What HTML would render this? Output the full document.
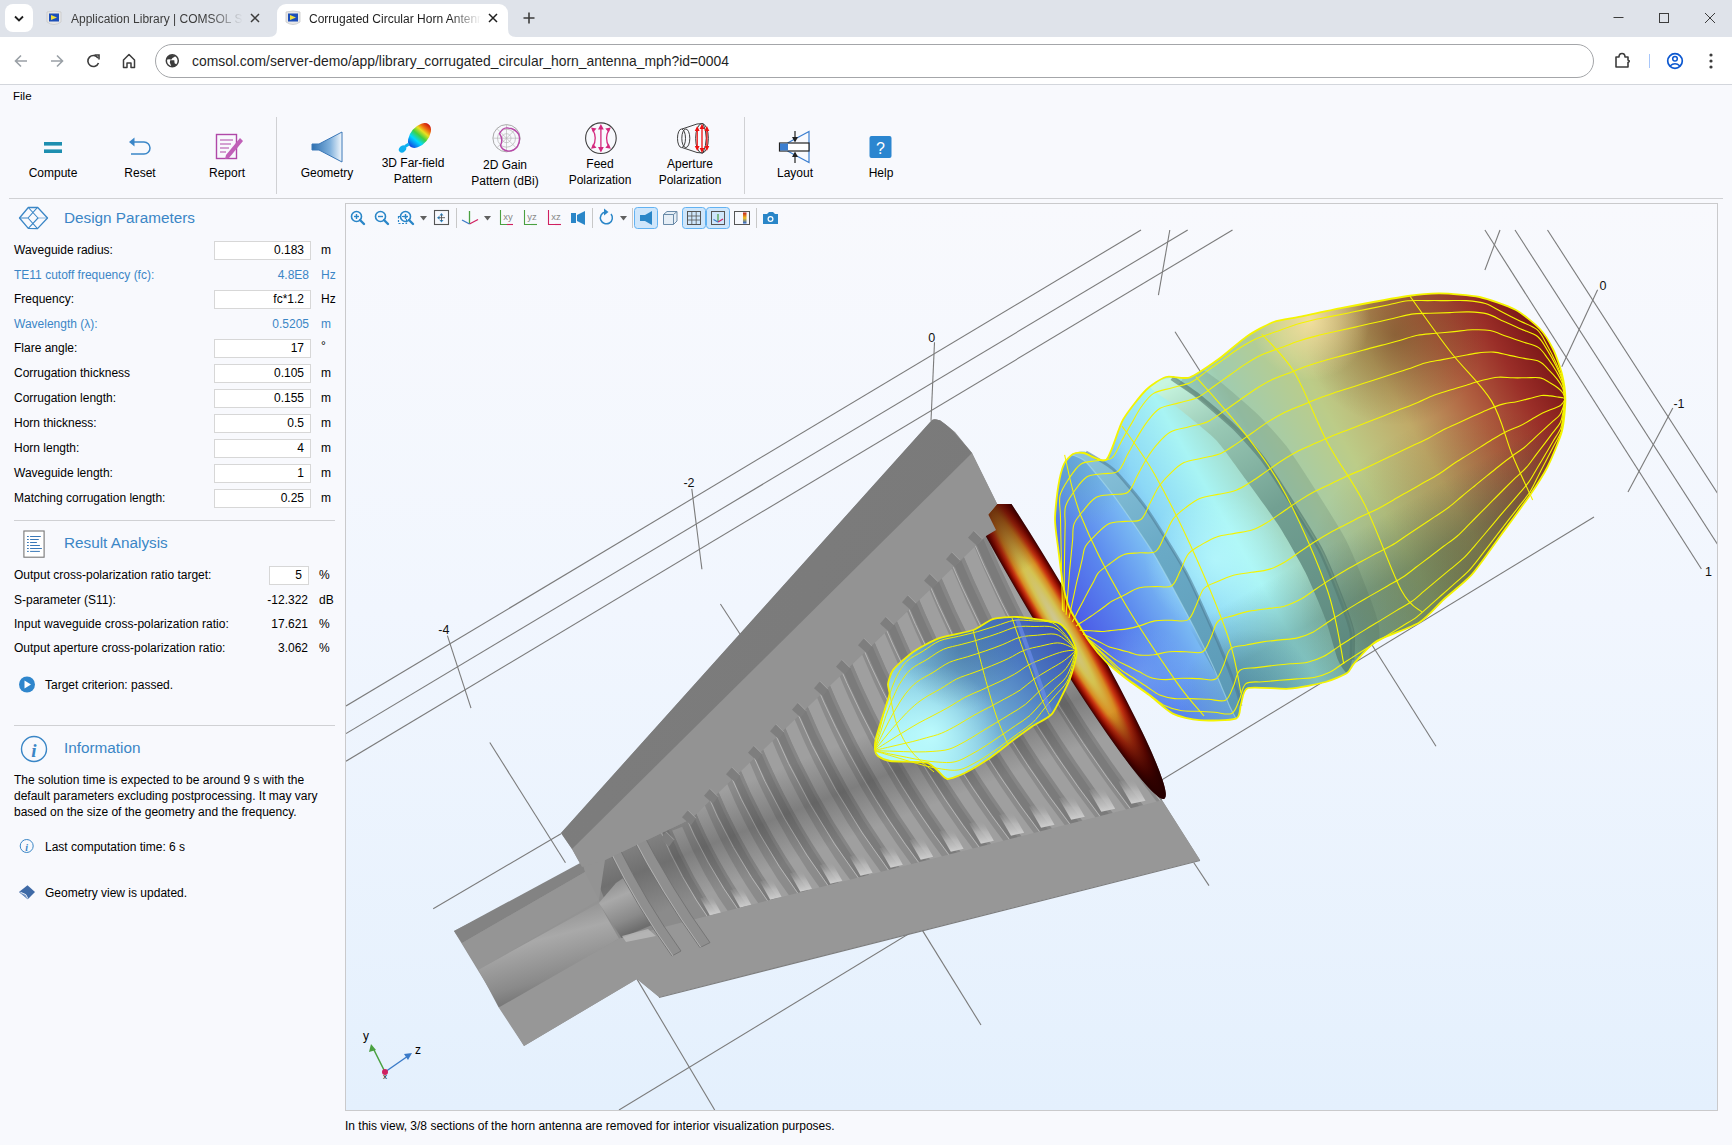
<!DOCTYPE html>
<html><head><meta charset="utf-8">
<style>
*{margin:0;padding:0;box-sizing:border-box}
html,body{width:1732px;height:1145px;overflow:hidden;background:#f8f9fd;font-family:"Liberation Sans",sans-serif;color:#000}
.a{position:absolute;white-space:nowrap}
.t{position:absolute;white-space:nowrap;font-size:12px;line-height:14px}
.blue{color:#3b86c6}
.inp{position:absolute;left:214px;width:97px;height:19px;border:1px solid #d7d7d7;background:#fff;font-size:12px;text-align:right;padding-right:6px;line-height:17px}
.sect{position:absolute;white-space:nowrap;font-size:15.3px;line-height:18px;color:#3b86c6}
.rib{position:absolute;font-size:12px;text-align:center;line-height:16px;white-space:nowrap}
svg{position:absolute;overflow:visible}
</style></head>
<body>
<!-- ===== browser chrome ===== -->
<div class="a" style="left:0;top:0;width:1732px;height:37px;background:#dfe3ea"></div>
<div class="a" style="left:0;top:37px;width:1732px;height:47px;background:#fff"></div>
<div class="a" style="left:0;top:84px;width:1732px;height:1px;background:#d3d6dc"></div>
<div class="a" style="left:5px;top:4px;width:28px;height:28px;background:#fff;border-radius:8px"></div>
<div class="a" style="left:277px;top:4px;width:231px;height:34px;background:#fff;border-radius:9px 9px 0 0"></div>
<svg style="left:0;top:0" width="1732" height="85">
 <path d="M269 37 Q277 37 277 29 L277 37Z M508 29 Q508 37 516 37 L508 37Z" fill="#fff"/>
 <path d="M15 16.5 L19 20.5 L23 16.5" fill="none" stroke="#1f1f1f" stroke-width="1.8"/>
 <!-- favicons -->
 <g transform="translate(47,11)"><path d="M0 1 Q7 -1 14 1 L14 11 Q7 16 0 11Z" fill="#e8e8e8" stroke="#c8c8c8" stroke-width="0.8"/><rect x="2" y="2.5" width="10" height="8" fill="#1d4fb8"/><path d="M4 4 L10 6.5 L4 9Z" fill="#f2e03a"/></g>
 <g transform="translate(286,11)"><path d="M0 1 Q7 -1 14 1 L14 11 Q7 16 0 11Z" fill="#e8e8e8" stroke="#c8c8c8" stroke-width="0.8"/><rect x="2" y="2.5" width="10" height="8" fill="#1d4fb8"/><path d="M4 4 L10 6.5 L4 9Z" fill="#f2e03a"/></g>
 <!-- tab close -->
 <path d="M251 14 L259 22 M259 14 L251 22" stroke="#3c3c3c" stroke-width="1.5"/>
 <path d="M489 14 L497 22 M497 14 L489 22" stroke="#1f1f1f" stroke-width="1.5"/>
 <path d="M529 12.5 L529 23.5 M523.5 18 L534.5 18" stroke="#3c3c3c" stroke-width="1.6"/>
 <!-- window controls -->
 <path d="M1613.5 17.5 L1623.5 17.5" stroke="#3c3c3c" stroke-width="1"/>
 <rect x="1659.5" y="13.5" width="9" height="9" fill="none" stroke="#3c3c3c" stroke-width="1"/>
 <path d="M1705 13 L1715 23 M1715 13 L1705 23" stroke="#3c3c3c" stroke-width="1"/>
 <!-- nav -->
 <path d="M27 61 L15.5 61 M21 55.5 L15.5 61 L21 66.5" fill="none" stroke="#9aa0a6" stroke-width="1.6"/>
 <path d="M51 61 L62.5 61 M57 55.5 L62.5 61 L57 66.5" fill="none" stroke="#9aa0a6" stroke-width="1.6"/>
 <path d="M98 58 A5.5 5.5 0 1 0 98.5 63" fill="none" stroke="#3c3c3c" stroke-width="1.6"/>
 <path d="M94.5 55 L99 55 L99 59.5" fill="none" stroke="#3c3c3c" stroke-width="1.6"/>
 <path d="M123.5 67.5 L123.5 60 L129 54.5 L134.5 60 L134.5 67.5 L131 67.5 L131 63 L127 63 L127 67.5Z" fill="none" stroke="#3c3c3c" stroke-width="1.5" stroke-linejoin="round"/>
 <circle cx="172.3" cy="60.8" r="6" fill="none" stroke="#3c3c3c" stroke-width="1.5"/>
 <path d="M166.6 59.5 Q167.5 56 171 55 L175.8 55.6 Q174.5 57.5 172.5 58 L171.2 59.8 L169.5 59.2Z M170.2 60.2 L174.3 60.3 L174.6 63.2 L176.6 64.6 Q174.5 67 171.5 66.8 L169.8 62.6Z" fill="#3c3c3c"/>
 <!-- right chrome -->
 <path d="M1616 57 L1619 57 Q1619 53.5 1622 53.5 Q1625 53.5 1625 57 L1628 57 L1628 60 Q1630.5 61 1628 62.5 L1628 67 L1616 67Z" fill="none" stroke="#3c3c3c" stroke-width="1.6" stroke-linejoin="round"/>
 <path d="M1649.5 54 L1649.5 68" stroke="#a8c7fa" stroke-width="1"/>
 <circle cx="1675" cy="61" r="7.3" fill="none" stroke="#0b57d0" stroke-width="1.7"/>
 <circle cx="1675" cy="58.8" r="2.3" fill="none" stroke="#0b57d0" stroke-width="1.5"/>
 <path d="M1670 66 Q1675 61.5 1680 66" fill="none" stroke="#0b57d0" stroke-width="1.5"/>
 <circle cx="1711" cy="55" r="1.6" fill="#3c3c3c"/><circle cx="1711" cy="61" r="1.6" fill="#3c3c3c"/><circle cx="1711" cy="67" r="1.6" fill="#3c3c3c"/>
</svg>
<div class="a" style="left:71px;top:12px;font-size:12px;line-height:14px;color:#3c3c3c;width:172px;overflow:hidden;-webkit-mask-image:linear-gradient(90deg,#000 80%,transparent)">Application Library | COMSOL Server</div>
<div class="a" style="left:309px;top:12px;font-size:12px;line-height:14px;color:#1f1f1f;width:172px;overflow:hidden;-webkit-mask-image:linear-gradient(90deg,#000 82%,transparent)">Corrugated Circular Horn Antenna</div>
<div class="a" style="left:155px;top:44px;width:1439px;height:34px;border:1px solid #a4a6a9;border-radius:17px"></div>
<div class="a" style="left:192px;top:53px;font-size:13.9px;line-height:16px;color:#1f1f1f">comsol.com/server-demo/app/library_corrugated_circular_horn_antenna_mph?id=0004</div>

<!-- ===== app menu ===== -->
<div class="t" style="left:13px;top:89px;font-size:11.5px">File</div>

<!-- ===== ribbon ===== -->
<div class="a" style="left:9px;top:198px;width:1714px;height:1px;background:#d0d1d4"></div>
<div class="a" style="left:276px;top:117px;width:1px;height:77px;background:#d0d1d4"></div>
<div class="a" style="left:744px;top:117px;width:1px;height:77px;background:#d0d1d4"></div>
<div class="rib" style="left:13px;width:80px;top:165px">Compute</div>
<div class="rib" style="left:100px;width:80px;top:165px">Reset</div>
<div class="rib" style="left:187px;width:80px;top:165px">Report</div>
<div class="rib" style="left:287px;width:80px;top:165px">Geometry</div>
<div class="rib" style="left:363px;width:100px;top:155px">3D Far-field<br>Pattern</div>
<div class="rib" style="left:455px;width:100px;top:157px">2D Gain<br>Pattern (dBi)</div>
<div class="rib" style="left:550px;width:100px;top:156px">Feed<br>Polarization</div>
<div class="rib" style="left:640px;width:100px;top:156px">Aperture<br>Polarization</div>
<div class="rib" style="left:755px;width:80px;top:165px">Layout</div>
<div class="rib" style="left:841px;width:80px;top:165px">Help</div>
<svg style="left:0;top:0" width="1000" height="200" id="ribicons">
 <!-- compute -->
 <rect x="44" y="142" width="18" height="3.6" fill="#1e8fb0"/><rect x="44" y="149.4" width="18" height="3.6" fill="#1e8fb0"/>
 <!-- reset -->
 <path d="M132 142 L144 142 A6 6 0 0 1 144 154 L131 154" fill="none" stroke="#3a86c8" stroke-width="1.5"/>
 <path d="M129 142 L134.5 137.5 L134.5 146.5Z" fill="#3a86c8"/>
 <!-- report -->
 <rect x="216.5" y="134.5" width="20" height="24" fill="none" stroke="#b048a8" stroke-width="1.4"/>
 <path d="M220 140 L233 140 M220 144 L231 144 M220 148 L229 148 M220 152 L226 152" stroke="#b048a8" stroke-width="1.2"/>
 <path d="M226 155 L240 138 L243 141 L229 158 L225 159Z" fill="#c060b8"/>
 <!-- geometry -->
 <defs><linearGradient id="geoG" x1="0" x2="1"><stop offset="0" stop-color="#2f70b0"/><stop offset="0.6" stop-color="#7fb0dc"/><stop offset="1" stop-color="#f4f8fc"/></linearGradient>
 <radialGradient id="ffG" cx="0.7" cy="0.3" r="0.8"><stop offset="0" stop-color="#e02020"/><stop offset="0.35" stop-color="#f0d020"/><stop offset="0.6" stop-color="#30c040"/><stop offset="1" stop-color="#1060e0"/></radialGradient></defs>
 <path d="M312 144 L319 144 L342 132 L342 162 L319 150 L312 150Z" fill="url(#geoG)" stroke="#3b78b8" stroke-width="1"/>
 <!-- 3D far field -->
 <defs><linearGradient id="ffL" x1="0" y1="0.5" x2="1" y2="0.5"><stop offset="0" stop-color="#1040e0"/><stop offset="0.3" stop-color="#00d8ff"/><stop offset="0.5" stop-color="#40d040"/><stop offset="0.68" stop-color="#e8e020"/><stop offset="0.82" stop-color="#f07010"/><stop offset="1" stop-color="#c81010"/></linearGradient></defs>
 <ellipse cx="402.5" cy="149" rx="4" ry="3.2" transform="rotate(-45 402.5 149)" fill="#10b0f0"/>
 <ellipse cx="419.5" cy="135.5" rx="14.5" ry="8.8" transform="rotate(-50 419.5 135.5)" fill="url(#ffL)"/>
 <path d="M405 146.5 L409 144" stroke="#10b0f0" stroke-width="3"/>
 <!-- 2D gain -->
 <circle cx="506.5" cy="138.2" r="13.6" fill="none" stroke="#a0a0a0" stroke-width="0.9"/>
 <circle cx="506.5" cy="138.2" r="9" fill="none" stroke="#b0b0b0" stroke-width="0.7"/>
 <circle cx="506.5" cy="138.2" r="4.5" fill="none" stroke="#b8b8b8" stroke-width="0.7"/>
 <path d="M492.9 138.2 L520.1 138.2 M506.5 124.6 L506.5 151.8 M496.9 128.6 L516.1 147.8 M516.1 128.6 L496.9 147.8" stroke="#b0b0b0" stroke-width="0.6"/>
 <path d="M499.5 133.5 Q503 127 508 128 Q515 128.5 518.5 134 Q521 140 517.5 146.5 Q513 152 507.5 151 Q502 150 500.5 145.5 Q503.5 139.5 499.5 133.5Z" fill="none" stroke="#b848a8" stroke-width="1.4"/>
 <!-- feed pol -->
 <circle cx="600.9" cy="138.2" r="15.3" fill="none" stroke="#404040" stroke-width="1.1"/>
 <path d="M600.9 127 L600.9 149.5 M593 130 Q597.5 138.2 593 146.5 M608.8 130 Q604.3 138.2 608.8 146.5" fill="none" stroke="#d4287e" stroke-width="1.3"/>
 <path d="M600.9 124 L598 129.5 L603.8 129.5Z M600.9 152.5 L598 147 L603.8 147Z M591 127.5 L596.5 128.5 L593 132.5Z M591 148.8 L596.5 147.8 L593 143.8Z M610.8 127.5 L605.3 128.5 L608.8 132.5Z M610.8 148.8 L605.3 147.8 L608.8 143.8Z" fill="#d4287e"/>
 <!-- aperture pol -->
 <path d="M682 129 L697 124 L703 123.5 Q709.5 138 703 153 L697 152.5 L682 147.5" fill="none" stroke="#404040" stroke-width="1"/>
 <ellipse cx="681.5" cy="138.3" rx="4" ry="9.3" fill="none" stroke="#404040" stroke-width="1"/>
 <ellipse cx="685.8" cy="138.3" rx="4" ry="9.3" fill="none" stroke="#404040" stroke-width="1"/>
 <ellipse cx="702" cy="138.3" rx="6.4" ry="14.8" fill="none" stroke="#404040" stroke-width="1"/>
 <path d="M697.2 128 L697.2 149 M702 126 L702 151 M706.9 128 L706.9 149" stroke="#f01010" stroke-width="1.3"/>
 <path d="M697.2 126 L694.8 131 L699.6 131Z M697.2 151 L694.8 146 L699.6 146Z M702 123.8 L699.6 129 L704.4 129Z M702 153 L699.6 148 L704.4 148Z M706.9 126 L704.5 131 L709.3 131Z M706.9 151 L704.5 146 L709.3 146Z" fill="#f01010"/>
 <!-- layout -->
 <path d="M787.5 143 L809 131.5 L809 162.5 L787.5 151" fill="none" stroke="#3b7ed0" stroke-width="1.2"/>
 <rect x="779.5" y="143" width="29.5" height="8" fill="#fff" stroke="#222" stroke-width="1.2"/>
 <rect x="780" y="143.5" width="8" height="7" fill="#3b7ed0"/>
 <path d="M795 131 L795 141 M795 153 L795 163" stroke="#222" stroke-width="1.2"/>
 <path d="M795 142.5 L792 137 L798 137Z M795 151.5 L792 157 L798 157Z" fill="#222"/>
 <!-- help -->
 <rect x="869.5" y="136" width="22" height="22" rx="2" fill="#2b86d0"/>
 <text x="880.5" y="153.5" font-family="Liberation Sans" font-size="16" fill="#fff" text-anchor="middle">?</text>
</svg>

<!-- ===== left panel ===== -->
<svg style="left:0;top:200px" width="345" height="720">
 <!-- design params icon -->
 <g fill="none" stroke="#3a86c6" stroke-width="1.3" stroke-linejoin="round">
  <path d="M19.5 18 L28.3 7.5 L37.5 7.3 L47.5 18 L37.5 28.6 L28.3 28.4Z"/>
  <path d="M37.5 7.3 L28 18 L37.5 28.6 M28.3 7.5 L38 18 L28.3 28.4 M19.5 18 L28 18" stroke-width="1.1"/>
  <path d="M38 18 L47.5 18" stroke-width="0.8" opacity="0.7"/>
 </g>
 <!-- result analysis icon -->
 <rect x="23.9" y="331" width="20.2" height="26.2" fill="#fff" stroke="#777" stroke-width="1.1"/>
 <path d="M27 336.5 L28.8 336.5 M27 339.5 L28.8 339.5 M27 342.5 L28.8 342.5 M27 345.5 L28.8 345.5 M27 348.5 L28.8 348.5 M27 351.4 L28.8 351.4 M30.1 336.5 L40.8 336.5 M30.1 339.5 L38.8 339.5 M30.1 342.5 L36.9 342.5 M30.1 345.5 L39.9 345.5 M30.1 348.5 L41.9 348.5 M30.1 351.4 L39.9 351.4" stroke="#3a78b8" stroke-width="1"/>
 <!-- target criterion icon -->
 <circle cx="27" cy="484.5" r="8" fill="#2f86cc"/>
 <path d="M24.5 480.5 L31 484.5 L24.5 488.5Z" fill="#fff"/>
 <!-- information icon -->
 <circle cx="34" cy="549" r="12.5" fill="none" stroke="#3a86c6" stroke-width="1.4"/>
 <text x="34" y="557" font-family="Liberation Serif" font-style="italic" font-weight="bold" font-size="19" fill="#3a86c6" text-anchor="middle">i</text>
 <!-- last comp icon -->
 <circle cx="26.7" cy="646" r="6.5" fill="none" stroke="#3a86c6" stroke-width="1"/>
 <text x="26.7" y="650.5" font-family="Liberation Serif" font-style="italic" font-weight="bold" font-size="10" fill="#3a86c6" text-anchor="middle">i</text>
 <!-- geometry updated -->
 <path d="M19 692 L27.5 685.2 L35 692 L27.8 699.3Z" fill="#3f6aa6"/>
 <path d="M19 692 L25.5 694.5 L27.8 699.3Z" fill="#6f92c4"/>
 <path d="M20.5 692.3 L25.8 694.6 L27.8 698.5" fill="none" stroke="#fff" stroke-width="0.9"/>
</svg>
<div class="sect" style="left:64px;top:209px">Design Parameters</div>
<div class="t" style="left:14px;top:243px">Waveguide radius:</div>
<div class="inp" style="top:241px">0.183</div><div class="t" style="left:321px;top:243px">m</div>
<div class="t blue" style="left:14px;top:268px">TE11 cutoff frequency (fc):</div>
<div class="t blue" style="left:250px;width:59px;text-align:right;top:268px">4.8E8</div><div class="t blue" style="left:321px;top:268px">Hz</div>
<div class="t" style="left:14px;top:292px">Frequency:</div>
<div class="inp" style="top:290px">fc*1.2</div><div class="t" style="left:321px;top:292px">Hz</div>
<div class="t blue" style="left:14px;top:317px">Wavelength (λ):</div>
<div class="t blue" style="left:250px;width:59px;text-align:right;top:317px">0.5205</div><div class="t blue" style="left:321px;top:317px">m</div>
<div class="t" style="left:14px;top:341px">Flare angle:</div>
<div class="inp" style="top:339px">17</div><div class="t" style="left:321px;top:339px">°</div>
<div class="t" style="left:14px;top:366px">Corrugation thickness</div>
<div class="inp" style="top:364px">0.105</div><div class="t" style="left:321px;top:366px">m</div>
<div class="t" style="left:14px;top:391px">Corrugation length:</div>
<div class="inp" style="top:389px">0.155</div><div class="t" style="left:321px;top:391px">m</div>
<div class="t" style="left:14px;top:416px">Horn thickness:</div>
<div class="inp" style="top:414px">0.5</div><div class="t" style="left:321px;top:416px">m</div>
<div class="t" style="left:14px;top:441px">Horn length:</div>
<div class="inp" style="top:439px">4</div><div class="t" style="left:321px;top:441px">m</div>
<div class="t" style="left:14px;top:466px">Waveguide length:</div>
<div class="inp" style="top:464px">1</div><div class="t" style="left:321px;top:466px">m</div>
<div class="t" style="left:14px;top:491px">Matching corrugation length:</div>
<div class="inp" style="top:489px">0.25</div><div class="t" style="left:321px;top:491px">m</div>
<div class="a" style="left:14px;top:520px;width:321px;height:1px;background:#d0d1d4"></div>
<div class="sect" style="left:64px;top:534px">Result Analysis</div>
<div class="t" style="left:14px;top:568px">Output cross-polarization ratio target:</div>
<div class="inp" style="left:269px;width:40px;top:566px">5</div><div class="t" style="left:319px;top:568px">%</div>
<div class="t" style="left:14px;top:593px">S-parameter (S11):</div>
<div class="t" style="left:240px;width:68px;text-align:right;top:593px">-12.322</div><div class="t" style="left:319px;top:593px">dB</div>
<div class="t" style="left:14px;top:617px">Input waveguide cross-polarization ratio:</div>
<div class="t" style="left:240px;width:68px;text-align:right;top:617px">17.621</div><div class="t" style="left:319px;top:617px">%</div>
<div class="t" style="left:14px;top:641px">Output aperture cross-polarization ratio:</div>
<div class="t" style="left:240px;width:68px;text-align:right;top:641px">3.062</div><div class="t" style="left:319px;top:641px">%</div>
<div class="t" style="left:45px;top:678px">Target criterion: passed.</div>
<div class="a" style="left:14px;top:725px;width:321px;height:1px;background:#d0d1d4"></div>
<div class="sect" style="left:64px;top:739px">Information</div>
<div class="t" style="left:14px;top:772px;line-height:16px">The solution time is expected to be around 9 s with the<br>default parameters excluding postprocessing. It may vary<br>based on the size of the geometry and the frequency.</div>
<div class="t" style="left:45px;top:840px">Last computation time: 6 s</div>
<div class="t" style="left:45px;top:886px">Geometry view is updated.</div>

<!-- ===== graphics ===== -->
<div class="a" style="left:345px;top:203px;width:1373px;height:908px;border:1px solid #cacacc;background:linear-gradient(#f8f9fd 0%,#f1f6fe 45%,#e4f0fd 100%)"></div>
<div class="t" style="left:345px;top:1119px">In this view, 3/8 sections of the horn antenna are removed for interior visualization purposes.</div>
<svg style="left:0;top:0" width="1732" height="1145">
<defs>
<linearGradient id="hlg" x1="0" y1="1" x2="0" y2="0"><stop offset="0" stop-color="#d4d4d4" stop-opacity="0.95"/><stop offset="0.5" stop-color="#c0c0c0" stop-opacity="0.7"/><stop offset="1" stop-color="#a0a0a0" stop-opacity="0"/></linearGradient>
<clipPath id="gclip"><rect x="346" y="204" width="1371" height="906"/></clipPath>
<linearGradient id="bore" x1="0" y1="0" x2="0.35" y2="1"><stop offset="0" stop-color="#7a7a7a"/><stop offset="0.45" stop-color="#a9a9a9"/><stop offset="0.8" stop-color="#8a8a8a"/><stop offset="1" stop-color="#6e6e6e"/></linearGradient>
<linearGradient id="outerband" x1="0" y1="0" x2="1" y2="0.3"><stop offset="0" stop-color="#7d7d7d"/><stop offset="1" stop-color="#7a7a7a"/></linearGradient>
<radialGradient id="diskG" cx="0.5" cy="0.5" fx="0.58" fy="0.56" r="0.5"><stop offset="0" stop-color="#ccc8a0"/><stop offset="0.3" stop-color="#d4c250"/><stop offset="0.52" stop-color="#d88c22"/><stop offset="0.68" stop-color="#c83410"/><stop offset="0.85" stop-color="#8a0a00"/><stop offset="1" stop-color="#380000"/></radialGradient>
<linearGradient id="diskShade" x1="0" y1="0" x2="1" y2="0"><stop offset="0.27" stop-color="#300000" stop-opacity="0.65"/><stop offset="0.42" stop-color="#300000" stop-opacity="0"/><stop offset="0.78" stop-color="#200000" stop-opacity="0"/><stop offset="0.95" stop-color="#200000" stop-opacity="0.8"/></linearGradient>
<linearGradient id="lobeS" gradientUnits="userSpaceOnUse" x1="920" y1="770" x2="1075" y2="625"><stop offset="0" stop-color="#a8f4fa"/><stop offset="0.35" stop-color="#78b8d8"/><stop offset="0.7" stop-color="#4a78c0"/><stop offset="1" stop-color="#3848b0"/></linearGradient>
<radialGradient id="lobeSD" gradientUnits="userSpaceOnUse" cx="960" cy="650" r="60"><stop offset="0" stop-color="#305878" stop-opacity="0.35"/><stop offset="1" stop-color="#305878" stop-opacity="0"/></radialGradient>
<radialGradient id="lobeSH" gradientUnits="userSpaceOnUse" cx="930" cy="735" r="70"><stop offset="0" stop-color="#c0ffff" stop-opacity="0.9"/><stop offset="1" stop-color="#c0ffff" stop-opacity="0"/></radialGradient>
<linearGradient id="lobeB" gradientUnits="userSpaceOnUse" x1="1085" y1="650" x2="1560" y2="380">
 <stop offset="0" stop-color="#4a56e6"/><stop offset="0.1" stop-color="#5a86ee"/><stop offset="0.24" stop-color="#8cd8f6"/><stop offset="0.34" stop-color="#a8f4f4"/><stop offset="0.46" stop-color="#a0ccb0"/><stop offset="0.6" stop-color="#bccc88"/><stop offset="0.72" stop-color="#c0aa68"/><stop offset="0.84" stop-color="#b06040"/><stop offset="0.93" stop-color="#9a2e28"/><stop offset="1" stop-color="#7e1818"/></linearGradient>
<linearGradient id="rim2" gradientUnits="userSpaceOnUse" x1="1170" y1="380" x2="1340" y2="660"><stop offset="0" stop-color="#c8f6e0"/><stop offset="0.2" stop-color="#98c8b4"/><stop offset="0.5" stop-color="#72a092"/><stop offset="1" stop-color="#5c887e"/></linearGradient>
<linearGradient id="rim1" gradientUnits="userSpaceOnUse" x1="1080" y1="455" x2="1235" y2="715"><stop offset="0" stop-color="#8cc4dc"/><stop offset="0.4" stop-color="#6aaac6"/><stop offset="1" stop-color="#5a98b4"/></linearGradient>
<radialGradient id="lobeBShade" gradientUnits="userSpaceOnUse" cx="1490" cy="600" r="190"><stop offset="0" stop-color="#201000" stop-opacity="0.33"/><stop offset="1" stop-color="#201000" stop-opacity="0"/></radialGradient>
<radialGradient id="lobeSk1" gradientUnits="userSpaceOnUse" cx="1140" cy="680" r="55"><stop offset="0" stop-color="#90d0f8" stop-opacity="0.4"/><stop offset="1" stop-color="#90d0f8" stop-opacity="0"/></radialGradient>
<radialGradient id="lobeSk2b" gradientUnits="userSpaceOnUse" cx="1250" cy="700" r="70"><stop offset="0" stop-color="#386878" stop-opacity="0.35"/><stop offset="1" stop-color="#386878" stop-opacity="0"/></radialGradient>
<linearGradient id="lobeBot" gradientUnits="userSpaceOnUse" x1="1230" y1="520" x2="1294" y2="633"><stop offset="0" stop-color="#204840" stop-opacity="0"/><stop offset="0.55" stop-color="#204840" stop-opacity="0"/><stop offset="1" stop-color="#204840" stop-opacity="0.3"/></linearGradient>
<radialGradient id="lobeSk1t" gradientUnits="userSpaceOnUse" cx="1070" cy="470" r="60"><stop offset="0" stop-color="#60a8c0" stop-opacity="0.6"/><stop offset="1" stop-color="#60a8c0" stop-opacity="0"/></radialGradient>
<radialGradient id="lobeBH" gradientUnits="userSpaceOnUse" cx="1310" cy="320" r="60"><stop offset="0" stop-color="#ffe8a8" stop-opacity="0.8"/><stop offset="1" stop-color="#ffe8a8" stop-opacity="0"/></radialGradient>
<radialGradient id="lobeBH2" gradientUnits="userSpaceOnUse" cx="1215" cy="560" r="70"><stop offset="0" stop-color="#c0ffff" stop-opacity="0.6"/><stop offset="1" stop-color="#c0ffff" stop-opacity="0"/></radialGradient>
<radialGradient id="lobeBD" gradientUnits="userSpaceOnUse" cx="1395" cy="335" r="90"><stop offset="0" stop-color="#503010" stop-opacity="0.42"/><stop offset="1" stop-color="#503010" stop-opacity="0"/></radialGradient>
</defs>
<g clip-path="url(#gclip)">
<line x1="346" y1="706" x2="1141" y2="230" stroke="#7b7b7b" stroke-width="1.1"/>
<line x1="346" y1="733.6" x2="1187.7" y2="230" stroke="#7b7b7b" stroke-width="1.1"/>
<line x1="346" y1="761.2" x2="1232.5" y2="230" stroke="#7b7b7b" stroke-width="1.1"/>
<line x1="447.4" y1="635.6" x2="471" y2="708.2" stroke="#7b7b7b" stroke-width="1.1"/>
<line x1="691.8" y1="488.9" x2="701.9" y2="569.2" stroke="#7b7b7b" stroke-width="1.1"/>
<line x1="934.5" y1="342.2" x2="931" y2="420.8" stroke="#7b7b7b" stroke-width="1.1"/>
<line x1="1169.8" y1="230" x2="1158.4" y2="295.2" stroke="#7b7b7b" stroke-width="1.1"/>
<line x1="489.8" y1="742.5" x2="565.5" y2="862.8" stroke="#7b7b7b" stroke-width="1.1"/>
<line x1="720.4" y1="604" x2="740" y2="634" stroke="#7b7b7b" stroke-width="1.1"/>
<line x1="1175" y1="331.7" x2="1200" y2="371" stroke="#7b7b7b" stroke-width="1.1"/>
<line x1="433.2" y1="908.7" x2="561" y2="833.8" stroke="#7b7b7b" stroke-width="1.1"/>
<line x1="636.7" y1="978.6" x2="714.7" y2="1110" stroke="#7b7b7b" stroke-width="1.1"/>
<line x1="619" y1="1110" x2="1594" y2="517" stroke="#7b7b7b" stroke-width="1.1"/>
<line x1="922.4" y1="930.4" x2="981" y2="1025" stroke="#7b7b7b" stroke-width="1.1"/>
<line x1="1371.4" y1="644" x2="1436" y2="746.3" stroke="#7b7b7b" stroke-width="1.1"/>
<line x1="1193.7" y1="862.5" x2="1209" y2="885.6" stroke="#7b7b7b" stroke-width="1.1"/>
<line x1="1484.9" y1="230" x2="1701.4" y2="569" stroke="#7b7b7b" stroke-width="1.1"/>
<line x1="1515" y1="230" x2="1718" y2="545" stroke="#7b7b7b" stroke-width="1.1"/>
<line x1="1547.5" y1="230" x2="1718" y2="494" stroke="#7b7b7b" stroke-width="1.1"/>
<line x1="1500" y1="230" x2="1484.9" y2="270" stroke="#7b7b7b" stroke-width="1.1"/>
<line x1="1597.6" y1="289.8" x2="1561.8" y2="366.8" stroke="#7b7b7b" stroke-width="1.1"/>
<line x1="1672.8" y1="408" x2="1628" y2="492" stroke="#7b7b7b" stroke-width="1.1"/>
<text x="443.9" y="634.3" font-family="Liberation Sans" font-size="12.5" text-anchor="middle" fill="#111">-4</text>
<text x="689" y="487.1" font-family="Liberation Sans" font-size="12.5" text-anchor="middle" fill="#111">-2</text>
<text x="931.7" y="342.2" font-family="Liberation Sans" font-size="12.5" text-anchor="middle" fill="#111">0</text>
<text x="1603" y="290.0" font-family="Liberation Sans" font-size="12.5" text-anchor="middle" fill="#111">0</text>
<text x="1679" y="408.2" font-family="Liberation Sans" font-size="12.5" text-anchor="middle" fill="#111">-1</text>
<text x="1708.6" y="575.5" font-family="Liberation Sans" font-size="12.5" text-anchor="middle" fill="#111">1</text>
<polygon points="932.0,420.0 561.0,833.0 572.0,849.0 582.0,867.0 454.0,931.0 524.0,1046.0 637.0,979.0 659.0,997.0 1200.0,860.0 1162.0,800.0 997.0,504.0 972.0,453.0 955.0,432.0 940.0,420.0" fill="#939393"/>
<clipPath id="corrclip"><polygon points="599.0,900.0 605.0,860.0 691.0,819.0 988.0,515.0 1080.0,660.0 1162.0,800.0 1162.0,812.0 619.0,950.0"/></clipPath>
<polygon points="599.0,900.0 605.0,860.0 691.0,819.0 988.0,515.0 1080.0,660.0 1162.0,800.0 1162.0,812.0 619.0,950.0" fill="#8b8b8b"/>
<g clip-path="url(#corrclip)">
<path d="M677.1,828.7 Q697.0,877.7 728.8,922.5" fill="none" stroke="#9f9f9f" stroke-width="11.0"/>
<path d="M665.1,828.7 Q685.0,877.7 716.8,922.5" fill="none" stroke="#7b7b7b" stroke-width="8.0"/>
<path d="M669.6,828.7 Q689.5,877.7 721.3,922.5" fill="none" stroke="#868686" stroke-width="3.0"/>
<path d="M659.6,828.7 Q679.5,877.7 711.3,922.5" fill="none" stroke="#b6b6b6" stroke-width="1"/>
<polygon points="710.0,915.7 721.0,912.7 711.3,895.2 700.3,898.2" fill="url(#hlg)"/>
<path d="M699.5,807.2 Q722.5,863.5 759.2,914.4" fill="none" stroke="#9f9f9f" stroke-width="11.2"/>
<path d="M687.2,807.2 Q710.2,863.5 747.0,914.4" fill="none" stroke="#7b7b7b" stroke-width="8.2"/>
<path d="M691.8,807.2 Q714.8,863.5 751.6,914.4" fill="none" stroke="#868686" stroke-width="3.1"/>
<path d="M681.6,807.2 Q704.6,863.5 741.4,914.4" fill="none" stroke="#b6b6b6" stroke-width="1"/>
<polygon points="740.1,907.7 751.3,904.7 741.4,886.9 730.2,889.9" fill="url(#hlg)"/>
<path d="M721.8,785.7 Q747.9,849.3 789.7,906.4" fill="none" stroke="#9f9f9f" stroke-width="11.4"/>
<path d="M709.4,785.7 Q735.4,849.3 777.2,906.4" fill="none" stroke="#7b7b7b" stroke-width="8.3"/>
<path d="M714.0,785.7 Q740.1,849.3 781.9,906.4" fill="none" stroke="#868686" stroke-width="3.1"/>
<path d="M703.6,785.7 Q729.6,849.3 771.4,906.4" fill="none" stroke="#b6b6b6" stroke-width="1"/>
<polygon points="770.2,899.7 781.6,896.7 771.5,878.6 760.0,881.6" fill="url(#hlg)"/>
<path d="M744.2,764.2 Q773.3,835.1 820.1,898.4" fill="none" stroke="#9f9f9f" stroke-width="11.7"/>
<path d="M731.5,764.2 Q760.6,835.1 807.3,898.4" fill="none" stroke="#7b7b7b" stroke-width="8.5"/>
<path d="M736.3,764.2 Q765.4,835.1 812.1,898.4" fill="none" stroke="#868686" stroke-width="3.2"/>
<path d="M725.6,764.2 Q754.7,835.1 801.4,898.4" fill="none" stroke="#b6b6b6" stroke-width="1"/>
<polygon points="800.3,891.7 812.0,888.7 801.5,870.2 789.9,873.2" fill="url(#hlg)"/>
<path d="M766.6,742.7 Q798.8,821.0 850.5,890.4" fill="none" stroke="#9f9f9f" stroke-width="11.9"/>
<path d="M753.6,742.7 Q785.8,821.0 837.5,890.4" fill="none" stroke="#7b7b7b" stroke-width="8.6"/>
<path d="M758.5,742.7 Q790.7,821.0 842.4,890.4" fill="none" stroke="#868686" stroke-width="3.2"/>
<path d="M747.5,742.7 Q779.8,821.0 831.4,890.4" fill="none" stroke="#b6b6b6" stroke-width="1"/>
<polygon points="830.4,883.7 842.3,880.7 831.6,861.9 819.7,864.9" fill="url(#hlg)"/>
<path d="M788.9,721.3 Q824.2,806.8 880.9,882.4" fill="none" stroke="#9f9f9f" stroke-width="12.1"/>
<path d="M775.7,721.3 Q811.0,806.8 867.7,882.4" fill="none" stroke="#7b7b7b" stroke-width="8.8"/>
<path d="M780.7,721.3 Q816.0,806.8 872.6,882.4" fill="none" stroke="#868686" stroke-width="3.3"/>
<path d="M769.5,721.3 Q804.8,806.8 861.5,882.4" fill="none" stroke="#b6b6b6" stroke-width="1"/>
<polygon points="860.5,875.7 872.6,872.7 861.7,853.6 849.6,856.6" fill="url(#hlg)"/>
<path d="M811.3,699.8 Q849.6,792.6 911.2,874.4" fill="none" stroke="#9f9f9f" stroke-width="12.3"/>
<path d="M797.9,699.8 Q836.2,792.6 897.8,874.4" fill="none" stroke="#7b7b7b" stroke-width="9.0"/>
<path d="M802.9,699.8 Q841.2,792.6 902.8,874.4" fill="none" stroke="#868686" stroke-width="3.4"/>
<path d="M791.5,699.8 Q829.9,792.6 891.5,874.4" fill="none" stroke="#b6b6b6" stroke-width="1"/>
<polygon points="890.6,867.7 902.9,864.7 891.8,845.3 879.5,848.3" fill="url(#hlg)"/>
<path d="M833.7,678.3 Q875.1,778.4 941.6,866.4" fill="none" stroke="#9f9f9f" stroke-width="12.5"/>
<path d="M820.0,678.3 Q861.4,778.4 928.0,866.4" fill="none" stroke="#7b7b7b" stroke-width="9.1"/>
<path d="M825.1,678.3 Q866.5,778.4 933.1,866.4" fill="none" stroke="#868686" stroke-width="3.4"/>
<path d="M813.5,678.3 Q854.9,778.4 921.5,866.4" fill="none" stroke="#b6b6b6" stroke-width="1"/>
<polygon points="920.7,859.7 933.2,856.7 921.9,836.9 909.4,839.9" fill="url(#hlg)"/>
<path d="M856.1,656.8 Q900.5,764.2 972.0,858.4" fill="none" stroke="#9f9f9f" stroke-width="12.8"/>
<path d="M842.1,656.8 Q886.6,764.2 958.1,858.4" fill="none" stroke="#7b7b7b" stroke-width="9.3"/>
<path d="M847.4,656.8 Q891.8,764.2 963.3,858.4" fill="none" stroke="#868686" stroke-width="3.5"/>
<path d="M835.5,656.8 Q880.0,764.2 951.5,858.4" fill="none" stroke="#b6b6b6" stroke-width="1"/>
<polygon points="950.8,851.7 963.6,848.7 952.0,828.6 939.2,831.6" fill="url(#hlg)"/>
<path d="M878.4,635.3 Q926.0,750.0 1002.4,850.4" fill="none" stroke="#9f9f9f" stroke-width="13.0"/>
<path d="M864.3,635.3 Q911.8,750.0 988.3,850.4" fill="none" stroke="#7b7b7b" stroke-width="9.4"/>
<path d="M869.6,635.3 Q917.1,750.0 993.6,850.4" fill="none" stroke="#868686" stroke-width="3.5"/>
<path d="M857.5,635.3 Q905.0,750.0 981.5,850.4" fill="none" stroke="#b6b6b6" stroke-width="1"/>
<polygon points="980.9,843.7 993.9,840.7 982.1,820.3 969.1,823.3" fill="url(#hlg)"/>
<path d="M900.8,613.8 Q951.4,735.8 1032.8,842.4" fill="none" stroke="#9f9f9f" stroke-width="13.2"/>
<path d="M886.4,613.8 Q937.0,735.8 1018.4,842.4" fill="none" stroke="#7b7b7b" stroke-width="9.6"/>
<path d="M891.8,613.8 Q942.4,735.8 1023.8,842.4" fill="none" stroke="#868686" stroke-width="3.6"/>
<path d="M879.5,613.8 Q930.1,735.8 1011.5,842.4" fill="none" stroke="#b6b6b6" stroke-width="1"/>
<polygon points="1011.0,835.7 1024.2,832.7 1012.2,811.9 999.0,814.9" fill="url(#hlg)"/>
<path d="M923.2,592.3 Q976.8,721.6 1063.2,834.4" fill="none" stroke="#9f9f9f" stroke-width="13.4"/>
<path d="M908.5,592.3 Q962.2,721.6 1048.5,834.4" fill="none" stroke="#7b7b7b" stroke-width="9.8"/>
<path d="M914.0,592.3 Q967.7,721.6 1054.0,834.4" fill="none" stroke="#868686" stroke-width="3.7"/>
<path d="M901.5,592.3 Q955.1,721.6 1041.5,834.4" fill="none" stroke="#b6b6b6" stroke-width="1"/>
<polygon points="1041.1,827.7 1054.5,824.7 1042.3,803.6 1028.9,806.6" fill="url(#hlg)"/>
<path d="M945.6,570.8 Q1002.3,707.4 1093.6,826.4" fill="none" stroke="#9f9f9f" stroke-width="13.6"/>
<path d="M930.7,570.8 Q987.4,707.4 1078.7,826.4" fill="none" stroke="#7b7b7b" stroke-width="9.9"/>
<path d="M936.3,570.8 Q993.0,707.4 1084.3,826.4" fill="none" stroke="#868686" stroke-width="3.7"/>
<path d="M923.5,570.8 Q980.2,707.4 1071.5,826.4" fill="none" stroke="#b6b6b6" stroke-width="1"/>
<polygon points="1071.2,819.7 1084.8,816.7 1072.4,795.2 1058.8,798.2" fill="url(#hlg)"/>
<path d="M967.9,549.3 Q1027.7,693.2 1124.0,818.4" fill="none" stroke="#9f9f9f" stroke-width="13.9"/>
<path d="M952.8,549.3 Q1012.6,693.2 1108.8,818.4" fill="none" stroke="#7b7b7b" stroke-width="10.1"/>
<path d="M958.5,549.3 Q1018.2,693.2 1114.5,818.4" fill="none" stroke="#868686" stroke-width="3.8"/>
<path d="M945.5,549.3 Q1005.3,693.2 1101.5,818.4" fill="none" stroke="#b6b6b6" stroke-width="1"/>
<polygon points="1101.3,811.7 1115.2,808.7 1102.5,786.9 1088.7,789.9" fill="url(#hlg)"/>
<path d="M990.3,527.8 Q1053.1,679.1 1154.3,810.3" fill="none" stroke="#9f9f9f" stroke-width="14.1"/>
<path d="M974.9,527.8 Q1037.8,679.1 1139.0,810.3" fill="none" stroke="#7b7b7b" stroke-width="10.2"/>
<path d="M980.7,527.8 Q1043.5,679.1 1144.7,810.3" fill="none" stroke="#868686" stroke-width="3.8"/>
<path d="M967.5,527.8 Q1030.3,679.1 1131.5,810.3" fill="none" stroke="#b6b6b6" stroke-width="1"/>
<polygon points="1131.4,803.7 1145.5,800.7 1132.6,778.6 1118.5,781.6" fill="url(#hlg)"/>
<path d="M1012.7,506.3 Q1078.6,664.9 1184.7,802.3" fill="none" stroke="#9f9f9f" stroke-width="14.3"/>
<path d="M997.1,506.3 Q1063.0,664.9 1169.1,802.3" fill="none" stroke="#7b7b7b" stroke-width="10.4"/>
<path d="M1002.9,506.3 Q1068.8,664.9 1175.0,802.3" fill="none" stroke="#868686" stroke-width="3.9"/>
<path d="M989.5,506.3 Q1055.4,664.9 1161.5,802.3" fill="none" stroke="#b6b6b6" stroke-width="1"/>
<polygon points="1161.5,795.7 1175.8,792.7 1162.7,770.2 1148.4,773.2" fill="url(#hlg)"/>
<defs><linearGradient id="shband" gradientUnits="userSpaceOnUse" x1="778.4" y1="769" x2="811.6" y2="853"><stop offset="0" stop-color="#303030" stop-opacity="0"/><stop offset="0.5" stop-color="#303030" stop-opacity="0.3"/><stop offset="1" stop-color="#303030" stop-opacity="0"/></linearGradient></defs>
<polygon points="583.4,846 1153.4,621 1186.6,705 616.6,930" fill="url(#shband)"/>
</g>
<polygon points="619.0,938.5 1162.0,800.3 1200.0,860.0 659.0,997.0 637.0,979.0 524.0,1046.0 498.7,1007.5" fill="#979797"/>
<line x1="659" y1="997.5" x2="1200" y2="860.5" stroke="#7d7d7d" stroke-width="1.2"/>
<polygon points="454.0,931.0 582.0,862.0 585.0,872.0 462.0,943.0" fill="#838383"/>
<polygon points="462.0,943.0 585.0,872.0 599.0,900.0 478.6,969.7" fill="#959595"/>
<polygon points="478.6,969.7 598.9,902.9 619.0,938.5 498.7,1007.5" fill="url(#bore)"/>
<polygon points="598.9,902.9 616.0,883.0 632.0,872.0 652.0,925.0 621.5,938.0" fill="url(#bore)"/>
<polygon points="622,936 648,929 656,936 626,942" fill="#c0c0c0" opacity="0.7"/>
<path d="M610,852.5 Q636.7,906.8 672,956 L681,951 Q645.7,901.8 619,847.5Z" fill="#8f8f8f" stroke="#6f6f6f" stroke-width="0.8"/>
<path d="M611,852.5 Q637.7,906.8 673,956" fill="none" stroke="#b4b4b4" stroke-width="0.9"/>
<path d="M630,833 Q660.7,892.9 700,947.6 L710,942.6 Q670.7,887.9 640,828Z" fill="#8f8f8f" stroke="#6f6f6f" stroke-width="0.8"/>
<path d="M631,833 Q661.7,892.9 701,947.6" fill="none" stroke="#b4b4b4" stroke-width="0.9"/>
<clipPath id="diskclip"><polygon points="997,504 1250,504 1250,900 900,900 900,560 988,515"/></clipPath><g clip-path="url(#diskclip)"><g transform="translate(1046.5,600) rotate(59.3)"><ellipse cx="0" cy="0" rx="231" ry="21" fill="url(#diskG)"/><ellipse cx="0" cy="0" rx="231" ry="21" fill="url(#diskShade)"/></g></g>
<path d="M875.0,750.0 C874.8,748.2 875.1,741.8 876.0,738.0 C876.9,734.2 882.6,716.4 884.0,712.0 C885.4,707.6 889.1,696.8 889.5,694.0 C889.9,691.2 887.6,686.4 888.0,684.0 C888.4,681.6 890.6,673.2 893.0,670.0 C895.4,666.8 907.8,655.6 912.4,652.4 C917.0,649.2 932.5,640.6 938.6,638.4 C944.7,636.2 968.1,631.9 973.5,630.0 C978.9,628.1 988.4,620.5 992.8,619.2 C997.2,617.9 1010.7,616.6 1017.2,617.0 C1023.7,617.4 1052.1,620.9 1057.4,622.7 C1062.7,624.5 1068.1,632.0 1070.0,635.0 C1071.9,638.0 1076.6,648.0 1076.6,652.4 C1076.6,656.8 1072.4,672.5 1070.0,678.6 C1067.6,684.7 1055.9,708.9 1052.2,713.6 C1048.5,718.3 1036.8,723.2 1033.0,725.8 C1029.2,728.4 1017.9,736.7 1013.7,739.8 C1009.5,742.9 995.9,753.9 991.0,757.2 C986.1,760.5 969.2,770.8 964.8,773.0 C960.4,775.2 950.1,779.3 947.3,779.0 C944.5,778.7 939.1,771.6 937.0,770.0 C934.9,768.4 931.1,763.4 926.4,762.5 C921.7,761.6 894.8,761.6 890.0,761.0 C885.2,760.4 879.5,757.1 878.0,756.0 C876.5,754.9 875.2,751.8 875.0,750.0Z" fill="url(#lobeS)"/>
<path d="M875.0,750.0 C874.8,748.2 875.1,741.8 876.0,738.0 C876.9,734.2 882.6,716.4 884.0,712.0 C885.4,707.6 889.1,696.8 889.5,694.0 C889.9,691.2 887.6,686.4 888.0,684.0 C888.4,681.6 890.6,673.2 893.0,670.0 C895.4,666.8 907.8,655.6 912.4,652.4 C917.0,649.2 932.5,640.6 938.6,638.4 C944.7,636.2 968.1,631.9 973.5,630.0 C978.9,628.1 988.4,620.5 992.8,619.2 C997.2,617.9 1010.7,616.6 1017.2,617.0 C1023.7,617.4 1052.1,620.9 1057.4,622.7 C1062.7,624.5 1068.1,632.0 1070.0,635.0 C1071.9,638.0 1076.6,648.0 1076.6,652.4 C1076.6,656.8 1072.4,672.5 1070.0,678.6 C1067.6,684.7 1055.9,708.9 1052.2,713.6 C1048.5,718.3 1036.8,723.2 1033.0,725.8 C1029.2,728.4 1017.9,736.7 1013.7,739.8 C1009.5,742.9 995.9,753.9 991.0,757.2 C986.1,760.5 969.2,770.8 964.8,773.0 C960.4,775.2 950.1,779.3 947.3,779.0 C944.5,778.7 939.1,771.6 937.0,770.0 C934.9,768.4 931.1,763.4 926.4,762.5 C921.7,761.6 894.8,761.6 890.0,761.0 C885.2,760.4 879.5,757.1 878.0,756.0 C876.5,754.9 875.2,751.8 875.0,750.0Z" fill="url(#lobeSH)"/>
<path d="M875.0,750.0 C874.8,748.2 875.1,741.8 876.0,738.0 C876.9,734.2 882.6,716.4 884.0,712.0 C885.4,707.6 889.1,696.8 889.5,694.0 C889.9,691.2 887.6,686.4 888.0,684.0 C888.4,681.6 890.6,673.2 893.0,670.0 C895.4,666.8 907.8,655.6 912.4,652.4 C917.0,649.2 932.5,640.6 938.6,638.4 C944.7,636.2 968.1,631.9 973.5,630.0 C978.9,628.1 988.4,620.5 992.8,619.2 C997.2,617.9 1010.7,616.6 1017.2,617.0 C1023.7,617.4 1052.1,620.9 1057.4,622.7 C1062.7,624.5 1068.1,632.0 1070.0,635.0 C1071.9,638.0 1076.6,648.0 1076.6,652.4 C1076.6,656.8 1072.4,672.5 1070.0,678.6 C1067.6,684.7 1055.9,708.9 1052.2,713.6 C1048.5,718.3 1036.8,723.2 1033.0,725.8 C1029.2,728.4 1017.9,736.7 1013.7,739.8 C1009.5,742.9 995.9,753.9 991.0,757.2 C986.1,760.5 969.2,770.8 964.8,773.0 C960.4,775.2 950.1,779.3 947.3,779.0 C944.5,778.7 939.1,771.6 937.0,770.0 C934.9,768.4 931.1,763.4 926.4,762.5 C921.7,761.6 894.8,761.6 890.0,761.0 C885.2,760.4 879.5,757.1 878.0,756.0 C876.5,754.9 875.2,751.8 875.0,750.0Z" fill="url(#lobeSD)"/>
<path d="M875.0,749.0 C875.8,746.0 878.0,736.8 879.6,730.7 C881.1,724.6 882.4,718.4 884.1,712.3 C885.8,706.2 887.6,700.2 889.7,694.2 C891.8,688.3 893.8,682.0 896.7,676.5 C899.5,671.1 902.4,665.6 906.8,661.3 C911.2,657.1 917.8,654.5 923.2,651.0 C928.7,647.6 933.8,643.3 939.7,640.8 C945.6,638.4 952.3,637.9 958.5,636.3 C964.8,634.8 971.1,633.4 977.3,631.7 C983.5,629.9 989.7,627.9 995.8,626.0 C1002.0,624.1 1008.1,621.2 1014.3,620.3 C1020.5,619.5 1026.9,620.5 1033.3,620.9 C1039.6,621.3 1047.0,620.6 1052.4,622.9 C1057.7,625.2 1061.3,630.2 1065.3,634.7 C1069.2,639.2 1074.2,647.5 1076.0,650.0" fill="none" stroke="#f0f000" stroke-width="1"/>
<path d="M875.0,749.2 C875.9,746.4 878.6,738.1 880.5,732.6 C882.3,727.0 883.9,721.4 885.9,715.9 C887.9,710.4 890.0,705.0 892.3,699.6 C894.7,694.1 896.9,688.5 900.0,683.4 C903.1,678.4 906.2,673.5 910.7,669.4 C915.2,665.4 921.6,662.8 927.1,659.4 C932.5,656.0 937.6,651.8 943.4,649.3 C949.3,646.8 955.8,646.0 961.9,644.3 C968.1,642.7 974.3,641.1 980.4,639.2 C986.5,637.4 992.6,635.3 998.6,633.2 C1004.6,631.2 1010.5,628.1 1016.5,626.9 C1022.6,625.8 1028.8,626.4 1034.9,626.5 C1041.1,626.5 1048.3,625.6 1053.4,627.3 C1058.6,629.1 1062.0,633.3 1065.8,637.1 C1069.6,640.9 1074.3,647.9 1076.0,650.0" fill="none" stroke="#f0f000" stroke-width="1"/>
<path d="M875.0,749.4 C876.1,747.1 879.6,740.1 881.8,735.5 C884.1,730.9 886.3,726.2 888.7,721.6 C891.1,717.0 893.6,712.4 896.4,707.9 C899.1,703.3 901.8,698.5 905.2,694.2 C908.6,689.9 912.1,685.7 916.8,682.1 C921.4,678.4 927.6,675.7 933.1,672.4 C938.5,669.1 943.6,665.0 949.3,662.4 C955.0,659.8 961.3,658.7 967.3,656.8 C973.3,654.9 979.3,653.1 985.2,651.0 C991.1,649.0 997.1,646.8 1002.9,644.5 C1008.7,642.2 1014.2,638.8 1020.0,637.3 C1025.7,635.7 1031.6,635.7 1037.5,635.2 C1043.3,634.7 1050.2,633.3 1055.1,634.2 C1059.9,635.2 1063.1,638.2 1066.6,640.8 C1070.1,643.4 1074.4,648.5 1076.0,650.0" fill="none" stroke="#f0f000" stroke-width="1"/>
<path d="M875.0,749.7 C876.4,747.9 880.7,742.7 883.6,739.2 C886.5,735.7 889.2,732.2 892.2,728.7 C895.2,725.2 898.2,721.8 901.5,718.3 C904.7,714.8 908.0,711.1 911.8,707.8 C915.6,704.4 919.6,701.1 924.4,698.0 C929.2,694.8 935.2,692.0 940.6,688.8 C946.0,685.7 951.1,681.7 956.6,679.0 C962.2,676.3 968.2,674.7 974.0,672.5 C979.7,670.4 985.5,668.3 991.3,665.9 C997.0,663.6 1002.8,661.2 1008.3,658.6 C1013.8,656.0 1018.9,652.3 1024.3,650.3 C1029.7,648.2 1035.2,647.3 1040.7,646.1 C1046.2,644.9 1052.7,643.0 1057.2,642.9 C1061.7,642.8 1064.5,644.3 1067.7,645.5 C1070.8,646.6 1074.6,649.2 1076.0,650.0" fill="none" stroke="#f0f000" stroke-width="1"/>
<path d="M875.0,750.0 C876.8,748.9 882.0,745.5 885.5,743.3 C889.0,741.1 892.5,738.8 896.1,736.6 C899.7,734.4 903.3,732.2 907.1,729.9 C911.0,727.6 914.8,725.2 919.1,722.8 C923.4,720.4 927.9,718.3 932.9,715.6 C937.9,713.0 943.6,710.1 949.0,707.0 C954.3,704.0 959.4,700.2 964.8,697.4 C970.2,694.5 975.9,692.4 981.4,690.0 C986.9,687.5 992.5,685.0 998.0,682.4 C1003.5,679.8 1009.1,677.3 1014.3,674.3 C1019.5,671.4 1024.2,667.3 1029.2,664.7 C1034.2,662.0 1039.3,660.3 1044.3,658.2 C1049.4,656.2 1055.4,653.8 1059.5,652.6 C1063.6,651.3 1066.1,651.1 1068.8,650.6 C1071.6,650.2 1074.8,650.1 1076.0,650.0" fill="none" stroke="#f0f000" stroke-width="1"/>
<path d="M875.0,750.3 C877.1,749.8 883.3,748.4 887.5,747.4 C891.6,746.4 895.7,745.5 899.9,744.5 C904.2,743.5 908.4,742.6 912.8,741.5 C917.2,740.4 921.6,739.2 926.3,737.8 C931.1,736.4 936.2,735.4 941.3,733.3 C946.5,731.2 952.0,728.1 957.3,725.2 C962.6,722.3 967.7,718.7 973.0,715.8 C978.2,712.8 983.5,710.2 988.8,707.4 C994.1,704.6 999.4,701.8 1004.7,698.9 C1009.9,696.0 1015.4,693.3 1020.3,690.0 C1025.2,686.7 1029.4,682.4 1034.0,679.1 C1038.6,675.8 1043.3,673.2 1047.9,670.4 C1052.5,667.6 1058.1,664.6 1061.8,662.2 C1065.5,659.8 1067.6,657.8 1070.0,655.8 C1072.3,653.8 1075.0,651.0 1076.0,650.0" fill="none" stroke="#f0f000" stroke-width="1"/>
<path d="M875.0,750.6 C877.4,750.7 884.5,751.0 889.2,751.1 C893.9,751.3 898.6,751.5 903.4,751.6 C908.2,751.7 913.0,752.0 917.9,751.9 C922.8,751.9 927.7,751.8 932.9,751.4 C938.1,750.9 943.7,750.8 949.0,749.2 C954.3,747.6 959.6,744.4 964.9,741.6 C970.1,738.8 975.2,735.4 980.3,732.3 C985.4,729.2 990.5,726.2 995.5,723.1 C1000.6,720.0 1005.7,717.0 1010.7,713.8 C1015.8,710.7 1021.1,707.8 1025.7,704.2 C1030.3,700.5 1034.1,695.9 1038.4,692.1 C1042.6,688.3 1046.9,684.9 1051.1,681.3 C1055.4,677.8 1060.6,674.4 1063.9,670.9 C1067.2,667.4 1069.0,663.9 1071.0,660.5 C1073.0,657.0 1075.2,651.7 1076.0,650.0" fill="none" stroke="#f0f000" stroke-width="1"/>
<path d="M875.0,750.8 C877.6,751.4 885.4,753.0 890.6,754.1 C895.8,755.1 901.0,756.2 906.2,757.2 C911.4,758.3 916.7,759.4 922.0,760.2 C927.3,761.1 932.6,761.9 938.1,762.1 C943.6,762.4 949.6,763.1 955.0,761.8 C960.5,760.6 965.6,757.4 970.8,754.6 C976.0,751.9 981.2,748.7 986.2,745.5 C991.2,742.3 996.0,738.9 1000.9,735.6 C1005.8,732.3 1010.7,729.0 1015.5,725.6 C1020.4,722.3 1025.6,719.3 1030.0,715.4 C1034.4,711.5 1037.9,706.6 1041.8,702.4 C1045.8,698.2 1049.7,694.1 1053.7,690.0 C1057.6,685.9 1062.5,682.1 1065.6,677.8 C1068.6,673.5 1070.1,668.8 1071.8,664.2 C1073.6,659.5 1075.3,652.4 1076.0,650.0" fill="none" stroke="#f0f000" stroke-width="1"/>
<path d="M875.0,751.0 C877.7,751.8 886.0,754.3 891.5,755.9 C897.0,757.6 902.5,759.3 908.0,760.9 C913.5,762.5 919.0,764.2 924.6,765.6 C930.2,766.9 935.7,768.3 941.5,769.0 C947.2,769.8 953.4,770.9 958.9,769.9 C964.5,768.9 969.5,765.7 974.7,763.0 C979.8,760.3 985.0,757.2 989.9,753.9 C994.9,750.7 999.5,747.0 1004.3,743.6 C1009.1,740.1 1013.9,736.7 1018.6,733.2 C1023.4,729.7 1028.5,726.6 1032.8,722.6 C1037.0,718.6 1040.3,713.5 1044.0,709.0 C1047.8,704.5 1051.6,700.1 1055.3,695.6 C1059.1,691.1 1063.8,687.1 1066.6,682.2 C1069.5,677.4 1070.8,671.9 1072.3,666.5 C1073.9,661.2 1075.4,652.8 1076.0,650.0" fill="none" stroke="#f0f000" stroke-width="1"/>
<path d="M889.0,690.0 C890.3,695.8 893.2,714.7 897.0,725.0 C900.8,735.3 905.8,744.2 912.0,752.0 C918.2,759.8 930.3,768.7 934.0,772.0" fill="none" stroke="#f0f000" stroke-width="1"/>
<path d="M973.0,630.0 C974.7,636.7 979.2,655.8 983.0,670.0 C986.8,684.2 991.8,702.5 996.0,715.0 C1000.2,727.5 1006.0,740.0 1008.0,745.0" fill="none" stroke="#f0f000" stroke-width="1"/>
<path d="M1012.0,618.0 C1014.2,624.2 1020.3,642.2 1025.0,655.0 C1029.7,667.8 1035.8,684.8 1040.0,695.0 C1044.2,705.2 1048.3,712.5 1050.0,716.0" fill="none" stroke="#f0f000" stroke-width="1"/>
<path d="M1017,619 Q1032,660 1050,712" fill="none" stroke="#7090f0" stroke-width="4" opacity="0.6"/>
<path d="M875.0,750.0 C874.8,748.2 875.1,741.8 876.0,738.0 C876.9,734.2 882.6,716.4 884.0,712.0 C885.4,707.6 889.1,696.8 889.5,694.0 C889.9,691.2 887.6,686.4 888.0,684.0 C888.4,681.6 890.6,673.2 893.0,670.0 C895.4,666.8 907.8,655.6 912.4,652.4 C917.0,649.2 932.5,640.6 938.6,638.4 C944.7,636.2 968.1,631.9 973.5,630.0 C978.9,628.1 988.4,620.5 992.8,619.2 C997.2,617.9 1010.7,616.6 1017.2,617.0 C1023.7,617.4 1052.1,620.9 1057.4,622.7 C1062.7,624.5 1068.1,632.0 1070.0,635.0 C1071.9,638.0 1076.6,648.0 1076.6,652.4 C1076.6,656.8 1072.4,672.5 1070.0,678.6 C1067.6,684.7 1055.9,708.9 1052.2,713.6 C1048.5,718.3 1036.8,723.2 1033.0,725.8 C1029.2,728.4 1017.9,736.7 1013.7,739.8 C1009.5,742.9 995.9,753.9 991.0,757.2 C986.1,760.5 969.2,770.8 964.8,773.0 C960.4,775.2 950.1,779.3 947.3,779.0 C944.5,778.7 939.1,771.6 937.0,770.0 C934.9,768.4 931.1,763.4 926.4,762.5 C921.7,761.6 894.8,761.6 890.0,761.0 C885.2,760.4 879.5,757.1 878.0,756.0 C876.5,754.9 875.2,751.8 875.0,750.0Z" fill="none" stroke="#f0f000" stroke-width="1.8"/>
<path d="M932,420 C936,417 944,422 953,431 L972,453 L997.3,504 L988.3,514.6 L996,530 L986,536 L691,819 L605,860 L582,867 L572,849 L972,453Z" fill="#939393"/>
<path d="M932,420 C936,417 944,422 953,431 L972,453 L572,849 L561,833Z" fill="url(#outerband)"/>
<polygon points="660.0,838.7 666.0,831.7 674.0,839.7 669.0,846.7" fill="#7e7e7e"/>
<line x1="666" y1="831.7" x2="674" y2="839.7" stroke="#a8a8a8" stroke-width="0.8"/>
<polygon points="682.0,817.2 688.0,810.2 696.0,818.2 691.0,825.2" fill="#7e7e7e"/>
<line x1="688" y1="810.2" x2="696" y2="818.2" stroke="#a8a8a8" stroke-width="0.8"/>
<polygon points="704.0,795.7 710.0,788.7 718.0,796.7 713.0,803.7" fill="#7e7e7e"/>
<line x1="710" y1="788.7" x2="718" y2="796.7" stroke="#a8a8a8" stroke-width="0.8"/>
<polygon points="726.0,774.2 732.0,767.2 740.0,775.2 735.0,782.2" fill="#7e7e7e"/>
<line x1="732" y1="767.2" x2="740" y2="775.2" stroke="#a8a8a8" stroke-width="0.8"/>
<polygon points="748.0,752.7 754.0,745.7 762.0,753.7 757.0,760.7" fill="#7e7e7e"/>
<line x1="754" y1="745.7" x2="762" y2="753.7" stroke="#a8a8a8" stroke-width="0.8"/>
<polygon points="770.0,731.2 776.0,724.2 784.0,732.2 779.0,739.2" fill="#7e7e7e"/>
<line x1="776" y1="724.2" x2="784" y2="732.2" stroke="#a8a8a8" stroke-width="0.8"/>
<polygon points="792.0,709.7 798.0,702.7 806.0,710.7 801.0,717.7" fill="#7e7e7e"/>
<line x1="798" y1="702.7" x2="806" y2="710.7" stroke="#a8a8a8" stroke-width="0.8"/>
<polygon points="814.0,688.2 820.0,681.2 828.0,689.2 823.0,696.2" fill="#7e7e7e"/>
<line x1="820" y1="681.2" x2="828" y2="689.2" stroke="#a8a8a8" stroke-width="0.8"/>
<polygon points="836.0,666.7 842.0,659.7 850.0,667.7 845.0,674.7" fill="#7e7e7e"/>
<line x1="842" y1="659.7" x2="850" y2="667.7" stroke="#a8a8a8" stroke-width="0.8"/>
<polygon points="858.0,645.2 864.0,638.2 872.0,646.2 867.0,653.2" fill="#7e7e7e"/>
<line x1="864" y1="638.2" x2="872" y2="646.2" stroke="#a8a8a8" stroke-width="0.8"/>
<polygon points="880.0,623.7 886.0,616.7 894.0,624.7 889.0,631.7" fill="#7e7e7e"/>
<line x1="886" y1="616.7" x2="894" y2="624.7" stroke="#a8a8a8" stroke-width="0.8"/>
<polygon points="902.0,602.2 908.0,595.2 916.0,603.2 911.0,610.2" fill="#7e7e7e"/>
<line x1="908" y1="595.2" x2="916" y2="603.2" stroke="#a8a8a8" stroke-width="0.8"/>
<polygon points="924.0,580.7 930.0,573.7 938.0,581.7 933.0,588.7" fill="#7e7e7e"/>
<line x1="930" y1="573.7" x2="938" y2="581.7" stroke="#a8a8a8" stroke-width="0.8"/>
<polygon points="946.0,559.2 952.0,552.2 960.0,560.2 955.0,567.2" fill="#7e7e7e"/>
<line x1="952" y1="552.2" x2="960" y2="560.2" stroke="#a8a8a8" stroke-width="0.8"/>
<polygon points="968.0,537.7 974.0,530.7 982.0,538.7 977.0,545.7" fill="#7e7e7e"/>
<line x1="974" y1="530.7" x2="982" y2="538.7" stroke="#a8a8a8" stroke-width="0.8"/>
<clipPath id="bigclip"><path d="M1055.0,519.4 C1055.0,512.0 1057.2,492.7 1058.3,486.2 C1059.3,479.7 1062.3,467.8 1064.0,464.0 C1065.7,460.2 1070.7,455.3 1073.0,454.0 C1075.3,452.7 1080.1,452.3 1084.0,453.0 C1087.9,453.7 1101.9,463.5 1106.4,459.6 C1111.0,455.7 1118.4,427.9 1123.0,419.8 C1127.6,411.7 1141.0,395.0 1146.0,390.0 C1151.0,385.0 1160.9,378.5 1166.0,377.0 C1171.1,375.5 1183.4,379.5 1189.5,377.5 C1195.6,375.5 1211.3,364.4 1218.0,359.6 C1224.7,354.8 1240.3,340.8 1246.8,336.4 C1253.3,332.0 1267.3,324.3 1273.6,322.0 C1279.9,319.7 1292.4,318.4 1300.5,316.7 C1308.6,315.0 1330.9,310.1 1343.4,307.7 C1355.9,305.3 1396.7,297.7 1408.0,296.0 C1419.3,294.3 1431.7,293.3 1440.0,293.4 C1448.3,293.5 1470.8,295.1 1479.5,297.0 C1488.2,298.9 1507.9,305.8 1515.0,309.5 C1522.1,313.2 1535.6,324.4 1540.0,329.0 C1544.4,333.6 1550.4,343.8 1553.0,349.0 C1555.6,354.2 1560.6,368.2 1562.0,374.0 C1563.4,379.8 1565.4,392.4 1565.4,399.0 C1565.4,405.6 1564.1,423.1 1562.0,431.0 C1559.9,438.9 1551.3,459.5 1547.5,467.0 C1543.7,474.5 1535.0,487.8 1529.6,495.7 C1524.2,503.6 1507.7,525.8 1501.0,535.0 C1494.3,544.2 1478.7,566.9 1472.0,574.4 C1465.3,581.9 1449.8,593.9 1443.7,599.5 C1437.6,605.1 1427.3,617.5 1419.4,622.4 C1411.5,627.3 1383.6,636.9 1376.0,641.6 C1368.4,646.3 1357.9,659.3 1354.5,663.0 C1351.1,666.7 1350.4,670.8 1347.0,673.0 C1343.6,675.2 1332.3,680.2 1325.5,682.0 C1318.7,683.8 1298.0,688.0 1289.0,688.7 C1280.0,689.4 1253.6,686.2 1248.0,688.0 C1242.4,689.8 1242.4,700.4 1241.0,704.0 C1239.6,707.6 1240.9,716.7 1236.0,718.6 C1231.1,720.5 1206.8,720.8 1199.4,720.2 C1192.0,719.6 1178.6,716.5 1172.8,713.6 C1167.0,710.7 1155.0,699.4 1149.6,695.3 C1144.2,691.2 1131.3,682.6 1126.3,678.7 C1121.3,674.8 1110.7,666.3 1106.4,662.0 C1102.1,657.7 1094.1,648.4 1089.8,642.2 C1085.5,636.0 1073.0,615.6 1069.9,609.0 C1066.8,602.4 1064.6,592.8 1063.2,585.8 C1061.8,578.8 1059.3,556.9 1058.3,549.2 C1057.3,541.5 1055.0,526.8 1055.0,519.4Z"/></clipPath>
<path d="M1055.0,519.4 C1055.0,512.0 1057.2,492.7 1058.3,486.2 C1059.3,479.7 1062.3,467.8 1064.0,464.0 C1065.7,460.2 1070.7,455.3 1073.0,454.0 C1075.3,452.7 1080.1,452.3 1084.0,453.0 C1087.9,453.7 1101.9,463.5 1106.4,459.6 C1111.0,455.7 1118.4,427.9 1123.0,419.8 C1127.6,411.7 1141.0,395.0 1146.0,390.0 C1151.0,385.0 1160.9,378.5 1166.0,377.0 C1171.1,375.5 1183.4,379.5 1189.5,377.5 C1195.6,375.5 1211.3,364.4 1218.0,359.6 C1224.7,354.8 1240.3,340.8 1246.8,336.4 C1253.3,332.0 1267.3,324.3 1273.6,322.0 C1279.9,319.7 1292.4,318.4 1300.5,316.7 C1308.6,315.0 1330.9,310.1 1343.4,307.7 C1355.9,305.3 1396.7,297.7 1408.0,296.0 C1419.3,294.3 1431.7,293.3 1440.0,293.4 C1448.3,293.5 1470.8,295.1 1479.5,297.0 C1488.2,298.9 1507.9,305.8 1515.0,309.5 C1522.1,313.2 1535.6,324.4 1540.0,329.0 C1544.4,333.6 1550.4,343.8 1553.0,349.0 C1555.6,354.2 1560.6,368.2 1562.0,374.0 C1563.4,379.8 1565.4,392.4 1565.4,399.0 C1565.4,405.6 1564.1,423.1 1562.0,431.0 C1559.9,438.9 1551.3,459.5 1547.5,467.0 C1543.7,474.5 1535.0,487.8 1529.6,495.7 C1524.2,503.6 1507.7,525.8 1501.0,535.0 C1494.3,544.2 1478.7,566.9 1472.0,574.4 C1465.3,581.9 1449.8,593.9 1443.7,599.5 C1437.6,605.1 1427.3,617.5 1419.4,622.4 C1411.5,627.3 1383.6,636.9 1376.0,641.6 C1368.4,646.3 1357.9,659.3 1354.5,663.0 C1351.1,666.7 1350.4,670.8 1347.0,673.0 C1343.6,675.2 1332.3,680.2 1325.5,682.0 C1318.7,683.8 1298.0,688.0 1289.0,688.7 C1280.0,689.4 1253.6,686.2 1248.0,688.0 C1242.4,689.8 1242.4,700.4 1241.0,704.0 C1239.6,707.6 1240.9,716.7 1236.0,718.6 C1231.1,720.5 1206.8,720.8 1199.4,720.2 C1192.0,719.6 1178.6,716.5 1172.8,713.6 C1167.0,710.7 1155.0,699.4 1149.6,695.3 C1144.2,691.2 1131.3,682.6 1126.3,678.7 C1121.3,674.8 1110.7,666.3 1106.4,662.0 C1102.1,657.7 1094.1,648.4 1089.8,642.2 C1085.5,636.0 1073.0,615.6 1069.9,609.0 C1066.8,602.4 1064.6,592.8 1063.2,585.8 C1061.8,578.8 1059.3,556.9 1058.3,549.2 C1057.3,541.5 1055.0,526.8 1055.0,519.4Z" fill="url(#lobeB)"/>
<path d="M1055.0,519.4 C1055.0,512.0 1057.2,492.7 1058.3,486.2 C1059.3,479.7 1062.3,467.8 1064.0,464.0 C1065.7,460.2 1070.7,455.3 1073.0,454.0 C1075.3,452.7 1080.1,452.3 1084.0,453.0 C1087.9,453.7 1101.9,463.5 1106.4,459.6 C1111.0,455.7 1118.4,427.9 1123.0,419.8 C1127.6,411.7 1141.0,395.0 1146.0,390.0 C1151.0,385.0 1160.9,378.5 1166.0,377.0 C1171.1,375.5 1183.4,379.5 1189.5,377.5 C1195.6,375.5 1211.3,364.4 1218.0,359.6 C1224.7,354.8 1240.3,340.8 1246.8,336.4 C1253.3,332.0 1267.3,324.3 1273.6,322.0 C1279.9,319.7 1292.4,318.4 1300.5,316.7 C1308.6,315.0 1330.9,310.1 1343.4,307.7 C1355.9,305.3 1396.7,297.7 1408.0,296.0 C1419.3,294.3 1431.7,293.3 1440.0,293.4 C1448.3,293.5 1470.8,295.1 1479.5,297.0 C1488.2,298.9 1507.9,305.8 1515.0,309.5 C1522.1,313.2 1535.6,324.4 1540.0,329.0 C1544.4,333.6 1550.4,343.8 1553.0,349.0 C1555.6,354.2 1560.6,368.2 1562.0,374.0 C1563.4,379.8 1565.4,392.4 1565.4,399.0 C1565.4,405.6 1564.1,423.1 1562.0,431.0 C1559.9,438.9 1551.3,459.5 1547.5,467.0 C1543.7,474.5 1535.0,487.8 1529.6,495.7 C1524.2,503.6 1507.7,525.8 1501.0,535.0 C1494.3,544.2 1478.7,566.9 1472.0,574.4 C1465.3,581.9 1449.8,593.9 1443.7,599.5 C1437.6,605.1 1427.3,617.5 1419.4,622.4 C1411.5,627.3 1383.6,636.9 1376.0,641.6 C1368.4,646.3 1357.9,659.3 1354.5,663.0 C1351.1,666.7 1350.4,670.8 1347.0,673.0 C1343.6,675.2 1332.3,680.2 1325.5,682.0 C1318.7,683.8 1298.0,688.0 1289.0,688.7 C1280.0,689.4 1253.6,686.2 1248.0,688.0 C1242.4,689.8 1242.4,700.4 1241.0,704.0 C1239.6,707.6 1240.9,716.7 1236.0,718.6 C1231.1,720.5 1206.8,720.8 1199.4,720.2 C1192.0,719.6 1178.6,716.5 1172.8,713.6 C1167.0,710.7 1155.0,699.4 1149.6,695.3 C1144.2,691.2 1131.3,682.6 1126.3,678.7 C1121.3,674.8 1110.7,666.3 1106.4,662.0 C1102.1,657.7 1094.1,648.4 1089.8,642.2 C1085.5,636.0 1073.0,615.6 1069.9,609.0 C1066.8,602.4 1064.6,592.8 1063.2,585.8 C1061.8,578.8 1059.3,556.9 1058.3,549.2 C1057.3,541.5 1055.0,526.8 1055.0,519.4Z" fill="url(#lobeBShade)"/>
<path d="M1055.0,519.4 C1055.0,512.0 1057.2,492.7 1058.3,486.2 C1059.3,479.7 1062.3,467.8 1064.0,464.0 C1065.7,460.2 1070.7,455.3 1073.0,454.0 C1075.3,452.7 1080.1,452.3 1084.0,453.0 C1087.9,453.7 1101.9,463.5 1106.4,459.6 C1111.0,455.7 1118.4,427.9 1123.0,419.8 C1127.6,411.7 1141.0,395.0 1146.0,390.0 C1151.0,385.0 1160.9,378.5 1166.0,377.0 C1171.1,375.5 1183.4,379.5 1189.5,377.5 C1195.6,375.5 1211.3,364.4 1218.0,359.6 C1224.7,354.8 1240.3,340.8 1246.8,336.4 C1253.3,332.0 1267.3,324.3 1273.6,322.0 C1279.9,319.7 1292.4,318.4 1300.5,316.7 C1308.6,315.0 1330.9,310.1 1343.4,307.7 C1355.9,305.3 1396.7,297.7 1408.0,296.0 C1419.3,294.3 1431.7,293.3 1440.0,293.4 C1448.3,293.5 1470.8,295.1 1479.5,297.0 C1488.2,298.9 1507.9,305.8 1515.0,309.5 C1522.1,313.2 1535.6,324.4 1540.0,329.0 C1544.4,333.6 1550.4,343.8 1553.0,349.0 C1555.6,354.2 1560.6,368.2 1562.0,374.0 C1563.4,379.8 1565.4,392.4 1565.4,399.0 C1565.4,405.6 1564.1,423.1 1562.0,431.0 C1559.9,438.9 1551.3,459.5 1547.5,467.0 C1543.7,474.5 1535.0,487.8 1529.6,495.7 C1524.2,503.6 1507.7,525.8 1501.0,535.0 C1494.3,544.2 1478.7,566.9 1472.0,574.4 C1465.3,581.9 1449.8,593.9 1443.7,599.5 C1437.6,605.1 1427.3,617.5 1419.4,622.4 C1411.5,627.3 1383.6,636.9 1376.0,641.6 C1368.4,646.3 1357.9,659.3 1354.5,663.0 C1351.1,666.7 1350.4,670.8 1347.0,673.0 C1343.6,675.2 1332.3,680.2 1325.5,682.0 C1318.7,683.8 1298.0,688.0 1289.0,688.7 C1280.0,689.4 1253.6,686.2 1248.0,688.0 C1242.4,689.8 1242.4,700.4 1241.0,704.0 C1239.6,707.6 1240.9,716.7 1236.0,718.6 C1231.1,720.5 1206.8,720.8 1199.4,720.2 C1192.0,719.6 1178.6,716.5 1172.8,713.6 C1167.0,710.7 1155.0,699.4 1149.6,695.3 C1144.2,691.2 1131.3,682.6 1126.3,678.7 C1121.3,674.8 1110.7,666.3 1106.4,662.0 C1102.1,657.7 1094.1,648.4 1089.8,642.2 C1085.5,636.0 1073.0,615.6 1069.9,609.0 C1066.8,602.4 1064.6,592.8 1063.2,585.8 C1061.8,578.8 1059.3,556.9 1058.3,549.2 C1057.3,541.5 1055.0,526.8 1055.0,519.4Z" fill="url(#lobeBH2)"/>
<path d="M1055.0,519.4 C1055.0,512.0 1057.2,492.7 1058.3,486.2 C1059.3,479.7 1062.3,467.8 1064.0,464.0 C1065.7,460.2 1070.7,455.3 1073.0,454.0 C1075.3,452.7 1080.1,452.3 1084.0,453.0 C1087.9,453.7 1101.9,463.5 1106.4,459.6 C1111.0,455.7 1118.4,427.9 1123.0,419.8 C1127.6,411.7 1141.0,395.0 1146.0,390.0 C1151.0,385.0 1160.9,378.5 1166.0,377.0 C1171.1,375.5 1183.4,379.5 1189.5,377.5 C1195.6,375.5 1211.3,364.4 1218.0,359.6 C1224.7,354.8 1240.3,340.8 1246.8,336.4 C1253.3,332.0 1267.3,324.3 1273.6,322.0 C1279.9,319.7 1292.4,318.4 1300.5,316.7 C1308.6,315.0 1330.9,310.1 1343.4,307.7 C1355.9,305.3 1396.7,297.7 1408.0,296.0 C1419.3,294.3 1431.7,293.3 1440.0,293.4 C1448.3,293.5 1470.8,295.1 1479.5,297.0 C1488.2,298.9 1507.9,305.8 1515.0,309.5 C1522.1,313.2 1535.6,324.4 1540.0,329.0 C1544.4,333.6 1550.4,343.8 1553.0,349.0 C1555.6,354.2 1560.6,368.2 1562.0,374.0 C1563.4,379.8 1565.4,392.4 1565.4,399.0 C1565.4,405.6 1564.1,423.1 1562.0,431.0 C1559.9,438.9 1551.3,459.5 1547.5,467.0 C1543.7,474.5 1535.0,487.8 1529.6,495.7 C1524.2,503.6 1507.7,525.8 1501.0,535.0 C1494.3,544.2 1478.7,566.9 1472.0,574.4 C1465.3,581.9 1449.8,593.9 1443.7,599.5 C1437.6,605.1 1427.3,617.5 1419.4,622.4 C1411.5,627.3 1383.6,636.9 1376.0,641.6 C1368.4,646.3 1357.9,659.3 1354.5,663.0 C1351.1,666.7 1350.4,670.8 1347.0,673.0 C1343.6,675.2 1332.3,680.2 1325.5,682.0 C1318.7,683.8 1298.0,688.0 1289.0,688.7 C1280.0,689.4 1253.6,686.2 1248.0,688.0 C1242.4,689.8 1242.4,700.4 1241.0,704.0 C1239.6,707.6 1240.9,716.7 1236.0,718.6 C1231.1,720.5 1206.8,720.8 1199.4,720.2 C1192.0,719.6 1178.6,716.5 1172.8,713.6 C1167.0,710.7 1155.0,699.4 1149.6,695.3 C1144.2,691.2 1131.3,682.6 1126.3,678.7 C1121.3,674.8 1110.7,666.3 1106.4,662.0 C1102.1,657.7 1094.1,648.4 1089.8,642.2 C1085.5,636.0 1073.0,615.6 1069.9,609.0 C1066.8,602.4 1064.6,592.8 1063.2,585.8 C1061.8,578.8 1059.3,556.9 1058.3,549.2 C1057.3,541.5 1055.0,526.8 1055.0,519.4Z" fill="url(#lobeBD)"/>
<path d="M1055.0,519.4 C1055.0,512.0 1057.2,492.7 1058.3,486.2 C1059.3,479.7 1062.3,467.8 1064.0,464.0 C1065.7,460.2 1070.7,455.3 1073.0,454.0 C1075.3,452.7 1080.1,452.3 1084.0,453.0 C1087.9,453.7 1101.9,463.5 1106.4,459.6 C1111.0,455.7 1118.4,427.9 1123.0,419.8 C1127.6,411.7 1141.0,395.0 1146.0,390.0 C1151.0,385.0 1160.9,378.5 1166.0,377.0 C1171.1,375.5 1183.4,379.5 1189.5,377.5 C1195.6,375.5 1211.3,364.4 1218.0,359.6 C1224.7,354.8 1240.3,340.8 1246.8,336.4 C1253.3,332.0 1267.3,324.3 1273.6,322.0 C1279.9,319.7 1292.4,318.4 1300.5,316.7 C1308.6,315.0 1330.9,310.1 1343.4,307.7 C1355.9,305.3 1396.7,297.7 1408.0,296.0 C1419.3,294.3 1431.7,293.3 1440.0,293.4 C1448.3,293.5 1470.8,295.1 1479.5,297.0 C1488.2,298.9 1507.9,305.8 1515.0,309.5 C1522.1,313.2 1535.6,324.4 1540.0,329.0 C1544.4,333.6 1550.4,343.8 1553.0,349.0 C1555.6,354.2 1560.6,368.2 1562.0,374.0 C1563.4,379.8 1565.4,392.4 1565.4,399.0 C1565.4,405.6 1564.1,423.1 1562.0,431.0 C1559.9,438.9 1551.3,459.5 1547.5,467.0 C1543.7,474.5 1535.0,487.8 1529.6,495.7 C1524.2,503.6 1507.7,525.8 1501.0,535.0 C1494.3,544.2 1478.7,566.9 1472.0,574.4 C1465.3,581.9 1449.8,593.9 1443.7,599.5 C1437.6,605.1 1427.3,617.5 1419.4,622.4 C1411.5,627.3 1383.6,636.9 1376.0,641.6 C1368.4,646.3 1357.9,659.3 1354.5,663.0 C1351.1,666.7 1350.4,670.8 1347.0,673.0 C1343.6,675.2 1332.3,680.2 1325.5,682.0 C1318.7,683.8 1298.0,688.0 1289.0,688.7 C1280.0,689.4 1253.6,686.2 1248.0,688.0 C1242.4,689.8 1242.4,700.4 1241.0,704.0 C1239.6,707.6 1240.9,716.7 1236.0,718.6 C1231.1,720.5 1206.8,720.8 1199.4,720.2 C1192.0,719.6 1178.6,716.5 1172.8,713.6 C1167.0,710.7 1155.0,699.4 1149.6,695.3 C1144.2,691.2 1131.3,682.6 1126.3,678.7 C1121.3,674.8 1110.7,666.3 1106.4,662.0 C1102.1,657.7 1094.1,648.4 1089.8,642.2 C1085.5,636.0 1073.0,615.6 1069.9,609.0 C1066.8,602.4 1064.6,592.8 1063.2,585.8 C1061.8,578.8 1059.3,556.9 1058.3,549.2 C1057.3,541.5 1055.0,526.8 1055.0,519.4Z" fill="url(#lobeBH)"/>
<path d="M1055.0,519.4 C1055.0,512.0 1057.2,492.7 1058.3,486.2 C1059.3,479.7 1062.3,467.8 1064.0,464.0 C1065.7,460.2 1070.7,455.3 1073.0,454.0 C1075.3,452.7 1080.1,452.3 1084.0,453.0 C1087.9,453.7 1101.9,463.5 1106.4,459.6 C1111.0,455.7 1118.4,427.9 1123.0,419.8 C1127.6,411.7 1141.0,395.0 1146.0,390.0 C1151.0,385.0 1160.9,378.5 1166.0,377.0 C1171.1,375.5 1183.4,379.5 1189.5,377.5 C1195.6,375.5 1211.3,364.4 1218.0,359.6 C1224.7,354.8 1240.3,340.8 1246.8,336.4 C1253.3,332.0 1267.3,324.3 1273.6,322.0 C1279.9,319.7 1292.4,318.4 1300.5,316.7 C1308.6,315.0 1330.9,310.1 1343.4,307.7 C1355.9,305.3 1396.7,297.7 1408.0,296.0 C1419.3,294.3 1431.7,293.3 1440.0,293.4 C1448.3,293.5 1470.8,295.1 1479.5,297.0 C1488.2,298.9 1507.9,305.8 1515.0,309.5 C1522.1,313.2 1535.6,324.4 1540.0,329.0 C1544.4,333.6 1550.4,343.8 1553.0,349.0 C1555.6,354.2 1560.6,368.2 1562.0,374.0 C1563.4,379.8 1565.4,392.4 1565.4,399.0 C1565.4,405.6 1564.1,423.1 1562.0,431.0 C1559.9,438.9 1551.3,459.5 1547.5,467.0 C1543.7,474.5 1535.0,487.8 1529.6,495.7 C1524.2,503.6 1507.7,525.8 1501.0,535.0 C1494.3,544.2 1478.7,566.9 1472.0,574.4 C1465.3,581.9 1449.8,593.9 1443.7,599.5 C1437.6,605.1 1427.3,617.5 1419.4,622.4 C1411.5,627.3 1383.6,636.9 1376.0,641.6 C1368.4,646.3 1357.9,659.3 1354.5,663.0 C1351.1,666.7 1350.4,670.8 1347.0,673.0 C1343.6,675.2 1332.3,680.2 1325.5,682.0 C1318.7,683.8 1298.0,688.0 1289.0,688.7 C1280.0,689.4 1253.6,686.2 1248.0,688.0 C1242.4,689.8 1242.4,700.4 1241.0,704.0 C1239.6,707.6 1240.9,716.7 1236.0,718.6 C1231.1,720.5 1206.8,720.8 1199.4,720.2 C1192.0,719.6 1178.6,716.5 1172.8,713.6 C1167.0,710.7 1155.0,699.4 1149.6,695.3 C1144.2,691.2 1131.3,682.6 1126.3,678.7 C1121.3,674.8 1110.7,666.3 1106.4,662.0 C1102.1,657.7 1094.1,648.4 1089.8,642.2 C1085.5,636.0 1073.0,615.6 1069.9,609.0 C1066.8,602.4 1064.6,592.8 1063.2,585.8 C1061.8,578.8 1059.3,556.9 1058.3,549.2 C1057.3,541.5 1055.0,526.8 1055.0,519.4Z" fill="url(#lobeSk1)"/>
<path d="M1055.0,519.4 C1055.0,512.0 1057.2,492.7 1058.3,486.2 C1059.3,479.7 1062.3,467.8 1064.0,464.0 C1065.7,460.2 1070.7,455.3 1073.0,454.0 C1075.3,452.7 1080.1,452.3 1084.0,453.0 C1087.9,453.7 1101.9,463.5 1106.4,459.6 C1111.0,455.7 1118.4,427.9 1123.0,419.8 C1127.6,411.7 1141.0,395.0 1146.0,390.0 C1151.0,385.0 1160.9,378.5 1166.0,377.0 C1171.1,375.5 1183.4,379.5 1189.5,377.5 C1195.6,375.5 1211.3,364.4 1218.0,359.6 C1224.7,354.8 1240.3,340.8 1246.8,336.4 C1253.3,332.0 1267.3,324.3 1273.6,322.0 C1279.9,319.7 1292.4,318.4 1300.5,316.7 C1308.6,315.0 1330.9,310.1 1343.4,307.7 C1355.9,305.3 1396.7,297.7 1408.0,296.0 C1419.3,294.3 1431.7,293.3 1440.0,293.4 C1448.3,293.5 1470.8,295.1 1479.5,297.0 C1488.2,298.9 1507.9,305.8 1515.0,309.5 C1522.1,313.2 1535.6,324.4 1540.0,329.0 C1544.4,333.6 1550.4,343.8 1553.0,349.0 C1555.6,354.2 1560.6,368.2 1562.0,374.0 C1563.4,379.8 1565.4,392.4 1565.4,399.0 C1565.4,405.6 1564.1,423.1 1562.0,431.0 C1559.9,438.9 1551.3,459.5 1547.5,467.0 C1543.7,474.5 1535.0,487.8 1529.6,495.7 C1524.2,503.6 1507.7,525.8 1501.0,535.0 C1494.3,544.2 1478.7,566.9 1472.0,574.4 C1465.3,581.9 1449.8,593.9 1443.7,599.5 C1437.6,605.1 1427.3,617.5 1419.4,622.4 C1411.5,627.3 1383.6,636.9 1376.0,641.6 C1368.4,646.3 1357.9,659.3 1354.5,663.0 C1351.1,666.7 1350.4,670.8 1347.0,673.0 C1343.6,675.2 1332.3,680.2 1325.5,682.0 C1318.7,683.8 1298.0,688.0 1289.0,688.7 C1280.0,689.4 1253.6,686.2 1248.0,688.0 C1242.4,689.8 1242.4,700.4 1241.0,704.0 C1239.6,707.6 1240.9,716.7 1236.0,718.6 C1231.1,720.5 1206.8,720.8 1199.4,720.2 C1192.0,719.6 1178.6,716.5 1172.8,713.6 C1167.0,710.7 1155.0,699.4 1149.6,695.3 C1144.2,691.2 1131.3,682.6 1126.3,678.7 C1121.3,674.8 1110.7,666.3 1106.4,662.0 C1102.1,657.7 1094.1,648.4 1089.8,642.2 C1085.5,636.0 1073.0,615.6 1069.9,609.0 C1066.8,602.4 1064.6,592.8 1063.2,585.8 C1061.8,578.8 1059.3,556.9 1058.3,549.2 C1057.3,541.5 1055.0,526.8 1055.0,519.4Z" fill="url(#lobeSk1t)"/>
<path d="M1055.0,519.4 C1055.0,512.0 1057.2,492.7 1058.3,486.2 C1059.3,479.7 1062.3,467.8 1064.0,464.0 C1065.7,460.2 1070.7,455.3 1073.0,454.0 C1075.3,452.7 1080.1,452.3 1084.0,453.0 C1087.9,453.7 1101.9,463.5 1106.4,459.6 C1111.0,455.7 1118.4,427.9 1123.0,419.8 C1127.6,411.7 1141.0,395.0 1146.0,390.0 C1151.0,385.0 1160.9,378.5 1166.0,377.0 C1171.1,375.5 1183.4,379.5 1189.5,377.5 C1195.6,375.5 1211.3,364.4 1218.0,359.6 C1224.7,354.8 1240.3,340.8 1246.8,336.4 C1253.3,332.0 1267.3,324.3 1273.6,322.0 C1279.9,319.7 1292.4,318.4 1300.5,316.7 C1308.6,315.0 1330.9,310.1 1343.4,307.7 C1355.9,305.3 1396.7,297.7 1408.0,296.0 C1419.3,294.3 1431.7,293.3 1440.0,293.4 C1448.3,293.5 1470.8,295.1 1479.5,297.0 C1488.2,298.9 1507.9,305.8 1515.0,309.5 C1522.1,313.2 1535.6,324.4 1540.0,329.0 C1544.4,333.6 1550.4,343.8 1553.0,349.0 C1555.6,354.2 1560.6,368.2 1562.0,374.0 C1563.4,379.8 1565.4,392.4 1565.4,399.0 C1565.4,405.6 1564.1,423.1 1562.0,431.0 C1559.9,438.9 1551.3,459.5 1547.5,467.0 C1543.7,474.5 1535.0,487.8 1529.6,495.7 C1524.2,503.6 1507.7,525.8 1501.0,535.0 C1494.3,544.2 1478.7,566.9 1472.0,574.4 C1465.3,581.9 1449.8,593.9 1443.7,599.5 C1437.6,605.1 1427.3,617.5 1419.4,622.4 C1411.5,627.3 1383.6,636.9 1376.0,641.6 C1368.4,646.3 1357.9,659.3 1354.5,663.0 C1351.1,666.7 1350.4,670.8 1347.0,673.0 C1343.6,675.2 1332.3,680.2 1325.5,682.0 C1318.7,683.8 1298.0,688.0 1289.0,688.7 C1280.0,689.4 1253.6,686.2 1248.0,688.0 C1242.4,689.8 1242.4,700.4 1241.0,704.0 C1239.6,707.6 1240.9,716.7 1236.0,718.6 C1231.1,720.5 1206.8,720.8 1199.4,720.2 C1192.0,719.6 1178.6,716.5 1172.8,713.6 C1167.0,710.7 1155.0,699.4 1149.6,695.3 C1144.2,691.2 1131.3,682.6 1126.3,678.7 C1121.3,674.8 1110.7,666.3 1106.4,662.0 C1102.1,657.7 1094.1,648.4 1089.8,642.2 C1085.5,636.0 1073.0,615.6 1069.9,609.0 C1066.8,602.4 1064.6,592.8 1063.2,585.8 C1061.8,578.8 1059.3,556.9 1058.3,549.2 C1057.3,541.5 1055.0,526.8 1055.0,519.4Z" fill="url(#lobeSk2b)"/>
<clipPath id="botclip"><polygon points="1242,720 1100,470 1600,200 1600,800"/></clipPath>
<g clip-path="url(#botclip)"><path d="M1055.0,519.4 C1055.0,512.0 1057.2,492.7 1058.3,486.2 C1059.3,479.7 1062.3,467.8 1064.0,464.0 C1065.7,460.2 1070.7,455.3 1073.0,454.0 C1075.3,452.7 1080.1,452.3 1084.0,453.0 C1087.9,453.7 1101.9,463.5 1106.4,459.6 C1111.0,455.7 1118.4,427.9 1123.0,419.8 C1127.6,411.7 1141.0,395.0 1146.0,390.0 C1151.0,385.0 1160.9,378.5 1166.0,377.0 C1171.1,375.5 1183.4,379.5 1189.5,377.5 C1195.6,375.5 1211.3,364.4 1218.0,359.6 C1224.7,354.8 1240.3,340.8 1246.8,336.4 C1253.3,332.0 1267.3,324.3 1273.6,322.0 C1279.9,319.7 1292.4,318.4 1300.5,316.7 C1308.6,315.0 1330.9,310.1 1343.4,307.7 C1355.9,305.3 1396.7,297.7 1408.0,296.0 C1419.3,294.3 1431.7,293.3 1440.0,293.4 C1448.3,293.5 1470.8,295.1 1479.5,297.0 C1488.2,298.9 1507.9,305.8 1515.0,309.5 C1522.1,313.2 1535.6,324.4 1540.0,329.0 C1544.4,333.6 1550.4,343.8 1553.0,349.0 C1555.6,354.2 1560.6,368.2 1562.0,374.0 C1563.4,379.8 1565.4,392.4 1565.4,399.0 C1565.4,405.6 1564.1,423.1 1562.0,431.0 C1559.9,438.9 1551.3,459.5 1547.5,467.0 C1543.7,474.5 1535.0,487.8 1529.6,495.7 C1524.2,503.6 1507.7,525.8 1501.0,535.0 C1494.3,544.2 1478.7,566.9 1472.0,574.4 C1465.3,581.9 1449.8,593.9 1443.7,599.5 C1437.6,605.1 1427.3,617.5 1419.4,622.4 C1411.5,627.3 1383.6,636.9 1376.0,641.6 C1368.4,646.3 1357.9,659.3 1354.5,663.0 C1351.1,666.7 1350.4,670.8 1347.0,673.0 C1343.6,675.2 1332.3,680.2 1325.5,682.0 C1318.7,683.8 1298.0,688.0 1289.0,688.7 C1280.0,689.4 1253.6,686.2 1248.0,688.0 C1242.4,689.8 1242.4,700.4 1241.0,704.0 C1239.6,707.6 1240.9,716.7 1236.0,718.6 C1231.1,720.5 1206.8,720.8 1199.4,720.2 C1192.0,719.6 1178.6,716.5 1172.8,713.6 C1167.0,710.7 1155.0,699.4 1149.6,695.3 C1144.2,691.2 1131.3,682.6 1126.3,678.7 C1121.3,674.8 1110.7,666.3 1106.4,662.0 C1102.1,657.7 1094.1,648.4 1089.8,642.2 C1085.5,636.0 1073.0,615.6 1069.9,609.0 C1066.8,602.4 1064.6,592.8 1063.2,585.8 C1061.8,578.8 1059.3,556.9 1058.3,549.2 C1057.3,541.5 1055.0,526.8 1055.0,519.4Z" fill="url(#lobeBot)"/></g>
<path d="M1071.5,454.6 C1071.5,455.6 1081.5,457.5 1086.0,462.0 C1090.5,466.5 1109.7,490.3 1116.4,499.4 C1123.1,508.5 1145.9,541.3 1152.9,552.6 C1159.9,563.9 1180.0,601.0 1186.0,612.3 C1192.0,623.6 1208.3,656.1 1212.6,665.4 C1216.9,674.7 1226.9,700.0 1229.2,705.3 C1231.5,710.6 1234.8,718.5 1236.0,718.6 C1237.2,718.7 1241.0,709.1 1241.0,706.0 C1241.0,702.9 1238.3,694.4 1236.0,688.0 C1233.7,681.6 1223.0,653.8 1218.0,642.2 C1213.0,630.7 1193.2,585.9 1186.0,572.5 C1178.8,559.1 1153.2,518.2 1146.0,508.0 C1138.8,497.8 1120.0,475.6 1114.0,470.0 C1108.0,464.4 1090.2,453.5 1086.0,452.0 C1081.8,450.5 1071.5,453.6 1071.5,454.6Z" fill="url(#rim1)"/>
<path d="M1241.0,706.0 C1240.5,704.2 1238.3,694.4 1236.0,688.0 C1233.7,681.6 1223.0,653.8 1218.0,642.2 C1213.0,630.7 1193.2,585.9 1186.0,572.5 C1178.8,559.1 1153.2,518.2 1146.0,508.0 C1138.8,497.8 1120.0,475.6 1114.0,470.0 C1108.0,464.4 1088.8,453.8 1086.0,452.0" fill="none" stroke="#4a7890" stroke-width="3" opacity="0.55"/>
<path d="M1071.5,454.6 C1073.0,455.3 1081.5,457.5 1086.0,462.0 C1090.5,466.5 1109.7,490.3 1116.4,499.4 C1123.1,508.5 1145.9,541.3 1152.9,552.6 C1159.9,563.9 1180.0,601.0 1186.0,612.3 C1192.0,623.6 1208.3,656.1 1212.6,665.4 C1216.9,674.7 1226.9,700.0 1229.2,705.3 C1231.5,710.6 1235.3,717.3 1236.0,718.6" fill="none" stroke="#a8dcf0" stroke-width="1.2" opacity="0.6"/>
<path d="M1149.6,386.6 C1150.2,389.6 1171.4,402.7 1178.0,408.0 C1184.6,413.3 1209.2,432.9 1216.0,440.0 C1222.8,447.1 1239.5,470.9 1245.8,479.5 C1252.1,488.1 1273.0,516.7 1279.0,526.0 C1285.0,535.3 1300.9,563.2 1305.5,572.5 C1310.1,581.8 1322.2,610.2 1325.4,619.0 C1328.7,627.8 1335.8,654.6 1338.0,660.0 C1340.2,665.4 1345.6,673.0 1347.0,673.0 C1348.4,673.0 1351.5,664.1 1352.0,660.0 C1352.5,655.9 1353.1,638.1 1352.0,632.0 C1350.9,625.9 1344.2,607.3 1341.0,599.0 C1337.8,590.7 1325.3,559.4 1320.0,549.2 C1314.7,539.0 1293.8,506.1 1288.0,497.0 C1282.2,487.9 1267.4,465.0 1262.0,458.0 C1256.6,451.0 1240.4,433.2 1234.0,427.0 C1227.6,420.8 1204.2,400.9 1198.0,396.0 C1191.8,391.1 1176.8,378.9 1172.0,378.0 C1167.2,377.1 1149.0,383.6 1149.6,386.6Z" fill="url(#rim2)"/>
<path d="M1352.0,660.0 C1352.0,657.2 1353.1,638.1 1352.0,632.0 C1350.9,625.9 1344.2,607.3 1341.0,599.0 C1337.8,590.7 1325.3,559.4 1320.0,549.2 C1314.7,539.0 1293.8,506.1 1288.0,497.0 C1282.2,487.9 1267.4,465.0 1262.0,458.0 C1256.6,451.0 1240.4,433.2 1234.0,427.0 C1227.6,420.8 1204.2,400.9 1198.0,396.0 C1191.8,391.1 1174.6,379.8 1172.0,378.0" fill="none" stroke="#54786c" stroke-width="5" opacity="0.6"/>
<g clip-path="url(#bigclip)"><path d="M1366.0,656.0 C1366.0,653.2 1367.1,634.1 1366.0,628.0 C1364.9,621.9 1358.2,603.3 1355.0,595.0 C1351.8,586.7 1339.3,555.4 1334.0,545.2 C1328.7,535.0 1307.8,502.1 1302.0,493.0 C1296.2,483.9 1281.4,461.0 1276.0,454.0 C1270.6,447.0 1254.4,429.2 1248.0,423.0 C1241.6,416.8 1218.2,396.9 1212.0,392.0 C1205.8,387.1 1188.6,375.8 1186.0,374.0" fill="none" stroke="#405848" stroke-width="26" opacity="0.16"/></g>
<path d="M1062.5,610.5 C1062.4,607.4 1062.2,597.8 1062.1,591.4 C1061.9,585.1 1061.8,578.7 1061.6,572.3 C1061.5,565.9 1061.4,559.6 1061.2,553.2 C1061.1,546.8 1061.0,540.4 1060.8,534.0 C1060.7,527.7 1060.6,521.3 1060.4,514.9 C1060.3,508.5 1058.7,501.7 1060.0,495.7 C1061.4,489.8 1065.0,484.6 1068.4,479.4 C1071.9,474.1 1076.0,467.3 1080.7,464.2 C1085.4,461.1 1091.3,461.8 1096.5,460.8 C1101.7,459.7 1107.7,461.2 1111.9,457.9 C1116.0,454.6 1118.4,446.6 1121.6,440.9 C1124.8,435.2 1128.0,429.5 1131.3,423.9 C1134.6,418.2 1137.5,412.1 1141.2,407.0 C1144.9,402.0 1148.4,396.6 1153.6,393.4 C1158.8,390.2 1166.1,389.7 1172.4,387.8 C1178.7,385.9 1185.4,385.0 1191.2,382.2 C1197.0,379.4 1201.9,374.7 1207.3,370.9 C1212.6,367.2 1218.0,363.4 1223.3,359.6 C1228.6,355.8 1233.8,351.8 1239.3,348.3 C1244.8,344.8 1250.4,341.5 1256.3,338.8 C1262.2,336.1 1268.6,334.3 1274.8,332.1 C1280.9,329.9 1287.0,327.4 1293.2,325.4 C1299.4,323.4 1305.7,321.8 1312.1,320.2 C1318.4,318.7 1324.9,317.7 1331.3,316.4 C1337.7,315.1 1344.1,313.8 1350.5,312.5 C1356.9,311.2 1363.3,309.9 1369.7,308.6 C1376.1,307.3 1382.5,306.0 1388.9,304.7 C1395.3,303.4 1401.6,301.5 1408.0,300.8 C1414.5,300.1 1421.0,300.6 1427.5,300.6 C1434.0,300.5 1440.5,300.6 1447.0,300.6 C1453.5,300.6 1460.2,300.2 1466.5,300.6 C1472.9,301.1 1479.3,301.6 1485.3,303.5 C1491.3,305.5 1496.9,309.4 1502.6,312.3 C1508.4,315.2 1514.1,318.1 1519.9,321.0 C1525.6,323.9 1532.6,325.7 1537.1,329.7 C1541.7,333.8 1544.1,339.9 1547.2,345.4 C1550.4,350.8 1553.3,356.7 1555.9,362.5 C1558.4,368.3 1561.1,374.0 1562.7,380.1 C1564.2,386.2 1564.6,395.8 1565.0,399.0" fill="none" stroke="#f4f400" stroke-width="1.1"/>
<path d="M1063.9,612.1 C1063.9,609.2 1064.0,600.5 1064.1,594.6 C1064.2,588.8 1064.2,582.9 1064.3,577.1 C1064.4,571.3 1064.4,565.4 1064.5,559.6 C1064.6,553.7 1064.7,547.8 1064.8,541.9 C1064.9,536.0 1065.0,530.1 1065.2,524.3 C1065.3,518.4 1064.0,512.1 1065.5,506.6 C1067.0,501.1 1070.7,496.3 1074.2,491.3 C1077.8,486.4 1082.0,479.9 1086.7,477.0 C1091.5,474.0 1097.4,474.7 1102.7,473.8 C1107.9,472.8 1113.9,474.4 1118.1,471.1 C1122.2,467.9 1124.5,459.9 1127.7,454.3 C1130.9,448.6 1133.9,442.8 1137.2,437.3 C1140.5,431.8 1143.6,426.1 1147.5,421.3 C1151.3,416.4 1154.9,411.3 1160.1,408.3 C1165.4,405.2 1172.6,404.7 1178.8,402.9 C1185.1,401.1 1191.8,400.2 1197.5,397.5 C1203.3,394.7 1208.3,390.2 1213.6,386.5 C1218.9,382.8 1224.2,379.0 1229.5,375.3 C1234.9,371.5 1240.0,367.5 1245.5,364.1 C1251.0,360.6 1256.5,357.3 1262.3,354.6 C1268.2,351.9 1274.5,350.1 1280.6,347.8 C1286.7,345.5 1292.7,343.0 1298.8,341.0 C1305.0,338.9 1311.2,337.2 1317.5,335.6 C1323.7,334.0 1330.1,332.8 1336.4,331.3 C1342.6,329.9 1348.9,328.5 1355.2,327.1 C1361.5,325.6 1367.8,324.2 1374.1,322.8 C1380.4,321.4 1386.7,320.0 1393.0,318.5 C1399.2,317.1 1405.4,315.0 1411.7,314.1 C1418.0,313.2 1424.4,313.5 1430.7,313.2 C1437.1,313.0 1443.4,312.8 1449.7,312.6 C1456.1,312.3 1462.6,311.7 1468.8,311.9 C1475.0,312.1 1481.3,312.3 1487.1,313.9 C1493.0,315.6 1498.4,319.0 1504.1,321.5 C1509.7,324.1 1515.2,326.5 1520.8,329.0 C1526.4,331.5 1533.1,332.9 1537.6,336.5 C1542.0,340.1 1544.5,345.7 1547.6,350.6 C1550.7,355.5 1553.6,360.9 1556.1,366.1 C1558.7,371.3 1561.2,376.4 1562.7,381.9 C1564.2,387.4 1564.6,396.2 1565.0,399.0" fill="none" stroke="#f4f400" stroke-width="1.1"/>
<path d="M1066.1,614.7 C1066.3,612.2 1066.9,604.7 1067.3,599.7 C1067.7,594.7 1068.1,589.7 1068.5,584.7 C1068.9,579.7 1069.3,574.8 1069.7,569.7 C1070.2,564.7 1070.7,559.5 1071.2,554.4 C1071.7,549.4 1072.2,544.3 1072.7,539.2 C1073.1,534.1 1072.3,528.7 1074.1,523.9 C1075.9,519.1 1079.8,514.8 1083.5,510.3 C1087.2,505.9 1091.5,499.9 1096.3,497.3 C1101.2,494.7 1107.1,495.3 1112.4,494.5 C1117.6,493.6 1123.8,495.3 1127.9,492.2 C1132.1,489.0 1134.3,481.1 1137.4,475.6 C1140.5,470.0 1143.3,463.9 1146.6,458.7 C1150.0,453.4 1153.5,448.3 1157.5,443.9 C1161.4,439.4 1165.2,434.7 1170.5,431.9 C1175.8,429.0 1182.9,428.5 1189.1,426.8 C1195.3,425.1 1201.9,424.3 1207.6,421.7 C1213.4,419.2 1218.4,414.9 1223.7,411.3 C1229.0,407.7 1234.2,403.9 1239.5,400.2 C1244.7,396.5 1249.9,392.6 1255.3,389.2 C1260.7,385.8 1266.2,382.5 1271.9,379.7 C1277.7,377.0 1283.9,375.1 1289.9,372.7 C1295.8,370.4 1301.8,367.8 1307.8,365.7 C1313.8,363.6 1320.0,361.8 1326.1,360.0 C1332.2,358.3 1338.3,356.8 1344.4,355.1 C1350.5,353.5 1356.7,351.9 1362.8,350.3 C1368.9,348.6 1375.0,347.0 1381.1,345.4 C1387.2,343.7 1393.4,342.2 1399.5,340.5 C1405.5,338.8 1411.5,336.5 1417.5,335.3 C1423.6,334.1 1429.7,334.0 1435.8,333.3 C1441.9,332.7 1448.0,332.2 1454.1,331.6 C1460.2,331.0 1466.4,330.0 1472.4,329.8 C1478.3,329.6 1484.3,329.4 1490.0,330.5 C1495.7,331.6 1500.9,334.4 1506.3,336.3 C1511.7,338.1 1517.0,340.0 1522.3,341.8 C1527.6,343.7 1534.0,344.5 1538.3,347.4 C1542.6,350.2 1545.0,354.9 1548.1,358.9 C1551.1,363.0 1554.1,367.4 1556.6,371.8 C1559.0,376.1 1561.4,380.3 1562.8,384.8 C1564.2,389.4 1564.6,396.6 1565.0,399.0" fill="none" stroke="#f4f400" stroke-width="1.1"/>
<path d="M1069.0,618.0 C1069.4,616.1 1070.7,610.2 1071.5,606.3 C1072.3,602.4 1073.2,598.5 1074.0,594.6 C1074.9,590.7 1075.6,586.9 1076.5,583.0 C1077.4,579.0 1078.5,574.8 1079.5,570.8 C1080.5,566.7 1081.4,562.7 1082.4,558.6 C1083.4,554.5 1083.2,550.3 1085.4,546.4 C1087.6,542.5 1091.6,538.9 1095.5,535.1 C1099.4,531.3 1104.0,526.1 1108.9,523.8 C1113.8,521.5 1119.7,522.1 1125.0,521.4 C1130.4,520.7 1136.6,522.6 1140.8,519.5 C1144.9,516.5 1147.0,508.8 1150.0,503.3 C1153.0,497.8 1155.5,491.5 1158.9,486.5 C1162.3,481.5 1166.3,477.3 1170.5,473.3 C1174.7,469.3 1178.7,465.2 1184.0,462.6 C1189.3,460.1 1196.3,459.6 1202.4,458.0 C1208.5,456.5 1215.1,455.8 1220.8,453.4 C1226.5,451.0 1231.5,447.0 1236.8,443.6 C1242.1,440.1 1247.2,436.3 1252.4,432.7 C1257.6,429.1 1262.7,425.3 1268.1,421.9 C1273.4,418.5 1278.8,415.3 1284.4,412.5 C1290.1,409.7 1296.1,407.6 1302.0,405.2 C1307.8,402.8 1313.6,400.2 1319.5,398.0 C1325.4,395.7 1331.4,393.8 1337.3,391.8 C1343.2,389.9 1349.1,388.1 1355.0,386.2 C1360.9,384.3 1366.7,382.4 1372.6,380.5 C1378.5,378.6 1384.4,376.7 1390.3,374.8 C1396.2,372.9 1402.1,371.1 1407.9,369.1 C1413.7,367.1 1419.4,364.6 1425.1,363.0 C1430.8,361.4 1436.6,360.7 1442.4,359.6 C1448.2,358.5 1453.9,357.4 1459.7,356.3 C1465.5,355.3 1471.3,353.8 1477.0,353.1 C1482.7,352.4 1488.4,351.7 1493.8,352.1 C1499.1,352.4 1504.2,354.4 1509.3,355.4 C1514.4,356.5 1519.3,357.4 1524.3,358.4 C1529.2,359.5 1535.1,359.6 1539.2,361.5 C1543.3,363.3 1545.8,366.8 1548.7,369.8 C1551.7,372.7 1554.7,376.0 1557.1,379.2 C1559.5,382.3 1561.5,385.3 1562.8,388.6 C1564.2,391.9 1564.6,397.3 1565.0,399.0" fill="none" stroke="#f4f400" stroke-width="1.1"/>
<path d="M1072.4,621.9 C1073.0,620.6 1075.1,616.6 1076.4,614.0 C1077.7,611.4 1079.1,608.8 1080.4,606.2 C1081.8,603.6 1083.0,601.1 1084.5,598.4 C1085.9,595.6 1087.6,592.7 1089.1,589.8 C1090.7,586.9 1092.3,584.1 1093.8,581.2 C1095.4,578.4 1095.9,575.5 1098.5,572.6 C1101.1,569.8 1105.3,567.0 1109.5,564.0 C1113.7,561.0 1118.4,556.5 1123.5,554.7 C1128.5,552.8 1134.4,553.4 1139.8,552.8 C1145.2,552.3 1151.6,554.3 1155.7,551.4 C1159.9,548.6 1161.8,541.0 1164.7,535.6 C1167.7,530.2 1169.8,523.6 1173.2,518.9 C1176.7,514.3 1181.2,511.0 1185.7,507.6 C1190.1,504.2 1194.4,500.6 1199.8,498.4 C1205.1,496.2 1211.9,495.7 1217.9,494.4 C1224.0,493.0 1230.4,492.5 1236.1,490.3 C1241.8,488.1 1246.8,484.5 1252.1,481.2 C1257.3,477.9 1262.3,474.1 1267.5,470.6 C1272.6,467.0 1277.7,463.3 1282.9,460.0 C1288.2,456.7 1293.5,453.5 1299.0,450.6 C1304.5,447.8 1310.4,445.6 1316.0,443.1 C1321.7,440.5 1327.3,437.9 1333.1,435.5 C1338.8,433.1 1344.6,431.1 1350.3,428.9 C1356.0,426.7 1361.6,424.5 1367.2,422.3 C1372.8,420.1 1378.5,417.9 1384.1,415.7 C1389.7,413.5 1395.3,411.3 1400.9,409.1 C1406.6,406.9 1412.3,404.8 1417.8,402.4 C1423.3,400.1 1428.5,397.2 1433.9,395.2 C1439.3,393.1 1444.7,391.8 1450.1,390.1 C1455.5,388.4 1460.9,386.8 1466.3,385.2 C1471.6,383.5 1477.1,381.6 1482.4,380.3 C1487.7,378.9 1493.1,377.6 1498.1,377.2 C1503.2,376.8 1508.0,377.7 1512.8,377.8 C1517.5,377.9 1521.9,377.8 1526.5,377.8 C1531.1,377.8 1536.5,377.1 1540.3,377.9 C1544.1,378.6 1546.6,380.7 1549.5,382.4 C1552.4,384.0 1555.5,386.0 1557.7,387.8 C1560.0,389.6 1561.7,391.2 1562.9,393.0 C1564.1,394.9 1564.7,398.0 1565.0,399.0" fill="none" stroke="#f4f400" stroke-width="1.1"/>
<path d="M1076.0,626.0 C1076.9,625.4 1079.8,623.5 1081.7,622.3 C1083.5,621.1 1085.4,619.8 1087.3,618.6 C1089.2,617.4 1090.9,616.3 1093.0,614.9 C1095.0,613.5 1097.3,611.8 1099.5,610.2 C1101.7,608.6 1103.9,607.1 1106.0,605.5 C1108.2,603.9 1109.5,602.5 1112.6,600.8 C1115.7,599.0 1120.1,597.1 1124.5,594.9 C1128.9,592.8 1134.0,589.2 1139.2,587.8 C1144.3,586.4 1150.2,586.9 1155.6,586.6 C1161.1,586.2 1167.7,588.4 1171.8,585.7 C1176.0,582.9 1177.7,575.5 1180.5,570.2 C1183.3,564.9 1185.0,558.0 1188.6,553.7 C1192.2,549.4 1197.3,547.3 1201.9,544.4 C1206.6,541.6 1211.2,538.7 1216.7,536.9 C1222.1,535.0 1228.6,534.5 1234.6,533.4 C1240.6,532.2 1246.9,531.8 1252.6,529.8 C1258.2,527.9 1263.3,524.7 1268.5,521.6 C1273.6,518.5 1278.6,514.7 1283.7,511.2 C1288.7,507.8 1293.7,504.2 1298.9,500.9 C1304.0,497.6 1309.3,494.4 1314.6,491.6 C1320.0,488.7 1325.6,486.3 1331.1,483.7 C1336.6,481.1 1342.1,478.3 1347.6,475.8 C1353.2,473.3 1358.9,471.1 1364.3,468.7 C1369.8,466.2 1375.0,463.6 1380.4,461.1 C1385.7,458.6 1391.0,456.0 1396.4,453.5 C1401.7,450.9 1407.0,448.4 1412.4,445.8 C1417.7,443.3 1423.2,440.9 1428.4,438.2 C1433.6,435.5 1438.4,432.3 1443.4,429.7 C1448.4,427.2 1453.4,425.1 1458.3,422.9 C1463.3,420.6 1468.3,418.4 1473.3,416.1 C1478.3,413.9 1483.3,411.4 1488.2,409.4 C1493.1,407.4 1498.1,405.4 1502.8,404.1 C1507.5,402.8 1512.1,402.6 1516.5,401.7 C1520.8,400.8 1524.8,399.7 1529.0,398.6 C1533.1,397.6 1537.9,396.0 1541.5,395.5 C1545.0,395.1 1547.5,395.7 1550.3,395.9 C1553.2,396.2 1556.3,396.8 1558.4,397.1 C1560.5,397.4 1561.9,397.4 1563.0,397.8 C1564.1,398.1 1564.7,398.8 1565.0,399.0" fill="none" stroke="#f4f400" stroke-width="1.1"/>
<path d="M1079.6,630.1 C1080.8,630.2 1084.5,630.4 1086.9,630.6 C1089.3,630.7 1091.8,630.9 1094.2,631.0 C1096.6,631.2 1098.9,631.5 1101.5,631.5 C1104.1,631.4 1107.1,630.9 1109.9,630.6 C1112.7,630.3 1115.5,630.1 1118.3,629.8 C1121.1,629.5 1123.1,629.6 1126.7,628.9 C1130.2,628.3 1134.9,627.3 1139.6,625.9 C1144.2,624.6 1149.5,621.8 1154.8,620.9 C1160.1,619.9 1165.9,620.4 1171.4,620.3 C1177.0,620.1 1183.7,622.4 1187.9,619.9 C1192.0,617.3 1193.7,610.1 1196.3,604.9 C1199.0,599.6 1200.3,592.5 1204.0,588.5 C1207.6,584.6 1213.3,583.5 1218.2,581.3 C1223.2,579.0 1228.0,576.8 1233.5,575.3 C1239.1,573.8 1245.4,573.3 1251.3,572.3 C1257.2,571.4 1263.4,571.1 1269.0,569.4 C1274.6,567.7 1279.7,564.9 1284.9,561.9 C1290.0,559.0 1294.8,555.2 1299.8,551.8 C1304.8,548.5 1309.8,545.0 1314.8,541.8 C1319.9,538.6 1325.0,535.4 1330.3,532.5 C1335.5,529.6 1340.9,527.0 1346.2,524.3 C1351.6,521.6 1356.9,518.7 1362.2,516.1 C1367.6,513.4 1373.1,511.1 1378.4,508.4 C1383.6,505.7 1388.5,502.7 1393.5,499.9 C1398.6,497.0 1403.6,494.1 1408.7,491.3 C1413.7,488.4 1418.8,485.5 1423.8,482.6 C1428.9,479.8 1434.1,477.1 1439.0,474.0 C1443.8,470.9 1448.3,467.3 1452.9,464.3 C1457.5,461.2 1462.0,458.5 1466.6,455.6 C1471.2,452.8 1475.7,449.9 1480.3,447.1 C1484.9,444.2 1489.5,441.2 1494.0,438.5 C1498.6,435.9 1503.1,433.2 1507.5,431.1 C1511.8,428.9 1516.2,427.6 1520.2,425.7 C1524.2,423.8 1527.7,421.5 1531.4,419.4 C1535.1,417.3 1539.3,414.8 1542.6,413.1 C1545.9,411.5 1548.4,410.6 1551.1,409.5 C1553.9,408.3 1557.1,407.5 1559.1,406.3 C1561.1,405.2 1562.1,403.7 1563.1,402.5 C1564.1,401.3 1564.7,399.6 1565.0,399.0" fill="none" stroke="#f4f400" stroke-width="1.1"/>
<path d="M1083.0,634.0 C1084.5,634.7 1088.9,636.9 1091.8,638.3 C1094.7,639.7 1097.7,641.1 1100.6,642.6 C1103.5,644.0 1106.2,645.7 1109.4,646.9 C1112.5,648.0 1116.1,648.7 1119.5,649.6 C1122.9,650.6 1126.3,651.5 1129.6,652.4 C1133.0,653.3 1135.8,654.8 1139.8,655.1 C1143.8,655.5 1148.6,655.3 1153.6,654.8 C1158.5,654.2 1164.0,652.2 1169.4,651.7 C1174.9,651.2 1180.6,651.7 1186.2,651.7 C1191.8,651.7 1198.7,654.2 1202.8,651.8 C1207.0,649.3 1208.5,642.3 1211.0,637.2 C1213.6,632.0 1214.5,624.6 1218.3,621.0 C1222.0,617.4 1228.2,617.2 1233.4,615.6 C1238.6,613.9 1243.7,612.3 1249.3,611.1 C1254.9,610.0 1261.0,609.5 1266.8,608.7 C1272.6,607.9 1278.8,607.8 1284.3,606.3 C1289.9,604.7 1295.0,602.3 1300.1,599.6 C1305.2,596.8 1310.0,593.0 1314.9,589.7 C1319.8,586.4 1324.7,583.1 1329.7,579.9 C1334.7,576.7 1339.7,573.6 1344.8,570.7 C1349.9,567.7 1355.2,565.0 1360.3,562.1 C1365.5,559.3 1370.6,556.4 1375.8,553.6 C1381.0,550.9 1386.4,548.4 1391.4,545.5 C1396.4,542.6 1401.0,539.2 1405.8,536.0 C1410.6,532.8 1415.4,529.6 1420.1,526.5 C1424.9,523.3 1429.7,520.1 1434.5,516.9 C1439.3,513.7 1444.3,510.7 1448.8,507.3 C1453.4,503.9 1457.5,500.0 1461.7,496.5 C1466.0,492.9 1470.1,489.6 1474.3,486.2 C1478.5,482.7 1482.7,479.3 1486.9,475.9 C1491.1,472.5 1495.3,469.0 1499.5,465.7 C1503.6,462.4 1507.8,459.1 1511.9,456.2 C1515.9,453.2 1520.0,450.9 1523.7,448.0 C1527.3,445.1 1530.3,441.9 1533.7,438.8 C1537.0,435.7 1540.7,432.3 1543.7,429.6 C1546.7,426.8 1549.2,424.5 1551.9,422.1 C1554.6,419.7 1557.9,417.5 1559.7,415.0 C1561.6,412.5 1562.3,409.6 1563.2,406.9 C1564.1,404.2 1564.7,400.3 1565.0,399.0" fill="none" stroke="#f4f400" stroke-width="1.1"/>
<path d="M1085.9,637.3 C1087.6,638.6 1092.6,642.4 1096.0,644.9 C1099.4,647.4 1102.7,650.0 1106.1,652.5 C1109.5,655.0 1112.6,657.9 1116.2,660.1 C1119.8,662.3 1123.9,664.0 1127.8,666.0 C1131.7,667.9 1135.5,669.9 1139.4,671.8 C1143.3,673.8 1146.7,676.4 1151.1,677.7 C1155.4,679.0 1160.4,679.5 1165.6,679.6 C1170.7,679.7 1176.4,678.4 1182.0,678.2 C1187.5,678.1 1193.2,678.5 1198.9,678.6 C1204.5,678.8 1211.5,681.4 1215.7,679.1 C1219.8,676.8 1221.2,669.9 1223.7,664.9 C1226.2,659.8 1226.8,652.1 1230.5,648.8 C1234.3,645.5 1241.1,646.2 1246.4,645.0 C1251.8,643.9 1257.2,642.7 1262.8,641.9 C1268.4,641.0 1274.4,640.6 1280.1,639.9 C1285.9,639.2 1291.9,639.3 1297.5,637.9 C1303.0,636.6 1308.2,634.5 1313.3,631.9 C1318.3,629.2 1323.0,625.4 1327.8,622.2 C1332.7,619.0 1337.6,615.7 1342.5,612.6 C1347.4,609.5 1352.3,606.4 1357.3,603.4 C1362.3,600.4 1367.4,597.6 1372.4,594.6 C1377.4,591.7 1382.4,588.8 1387.5,585.9 C1392.5,583.0 1397.8,580.5 1402.6,577.3 C1407.4,574.2 1411.8,570.5 1416.3,567.0 C1420.9,563.6 1425.4,560.1 1430.0,556.7 C1434.5,553.2 1439.1,549.8 1443.6,546.3 C1448.2,542.9 1453.0,539.7 1457.3,536.0 C1461.6,532.3 1465.4,528.0 1469.3,524.1 C1473.2,520.2 1477.0,516.3 1480.9,512.4 C1484.8,508.5 1488.6,504.6 1492.5,500.7 C1496.4,496.8 1500.3,492.8 1504.1,489.0 C1508.0,485.2 1511.8,481.4 1515.6,477.7 C1519.4,474.1 1523.3,470.9 1526.6,467.2 C1530.0,463.5 1532.6,459.4 1535.6,455.4 C1538.6,451.5 1541.8,447.4 1544.6,443.7 C1547.5,439.9 1550.0,436.5 1552.6,432.9 C1555.2,429.4 1558.5,426.1 1560.3,422.4 C1562.1,418.7 1562.5,414.6 1563.3,410.7 C1564.1,406.8 1564.7,400.9 1565.0,399.0" fill="none" stroke="#f4f400" stroke-width="1.1"/>
<path d="M1088.1,639.9 C1090.0,641.5 1095.5,646.6 1099.2,650.0 C1102.9,653.4 1106.6,656.7 1110.3,660.1 C1114.0,663.5 1117.4,667.2 1121.4,670.3 C1125.4,673.3 1129.9,675.8 1134.2,678.5 C1138.4,681.3 1142.7,684.0 1146.9,686.7 C1151.2,689.5 1155.0,693.0 1159.7,695.0 C1164.3,696.9 1169.5,698.0 1174.8,698.6 C1180.1,699.2 1186.0,698.4 1191.6,698.6 C1197.2,698.7 1202.9,699.1 1208.6,699.3 C1214.2,699.6 1221.4,702.3 1225.5,700.2 C1229.7,698.0 1231.0,691.2 1233.4,686.2 C1235.8,681.2 1236.1,673.3 1240.0,670.2 C1243.8,667.1 1250.9,668.4 1256.4,667.6 C1262.0,666.8 1267.5,666.1 1273.2,665.5 C1278.8,664.8 1284.6,664.4 1290.4,663.8 C1296.1,663.3 1302.1,663.4 1307.6,662.2 C1313.1,661.0 1318.3,659.2 1323.3,656.6 C1328.4,654.1 1332.9,650.3 1337.8,647.1 C1342.6,644.0 1347.4,640.8 1352.3,637.7 C1357.1,634.6 1362.0,631.6 1366.9,628.6 C1371.8,625.5 1376.8,622.6 1381.7,619.6 C1386.6,616.6 1391.5,613.6 1396.4,610.6 C1401.4,607.6 1406.5,605.0 1411.2,601.8 C1415.9,598.5 1420.0,594.5 1424.4,590.9 C1428.8,587.2 1433.2,583.5 1437.5,579.9 C1441.9,576.2 1446.3,572.6 1450.7,568.9 C1455.1,565.3 1459.7,561.9 1463.8,557.9 C1467.9,554.0 1471.4,549.6 1475.1,545.3 C1478.8,541.1 1482.4,536.8 1486.0,532.5 C1489.6,528.2 1493.2,524.0 1496.8,519.7 C1500.4,515.4 1504.1,511.1 1507.7,506.9 C1511.3,502.7 1514.9,498.5 1518.5,494.3 C1522.0,490.1 1525.8,486.3 1528.9,481.9 C1532.0,477.6 1534.4,472.8 1537.1,468.2 C1539.9,463.6 1542.7,459.0 1545.3,454.5 C1548.0,450.0 1550.5,445.6 1553.1,441.2 C1555.6,436.8 1559.0,432.7 1560.7,428.1 C1562.4,423.5 1562.6,418.4 1563.4,413.6 C1564.1,408.7 1564.7,401.4 1565.0,399.0" fill="none" stroke="#f4f400" stroke-width="1.1"/>
<path d="M1089.5,641.5 C1091.5,643.4 1097.3,649.3 1101.2,653.2 C1105.2,657.1 1109.1,661.0 1113.0,664.9 C1116.9,668.8 1120.5,673.1 1124.7,676.6 C1128.9,680.2 1133.7,683.1 1138.2,686.4 C1142.6,689.6 1147.1,692.9 1151.6,696.1 C1156.1,699.3 1160.3,703.4 1165.1,705.8 C1170.0,708.2 1175.2,709.6 1180.6,710.5 C1186.0,711.5 1191.9,711.0 1197.6,711.3 C1203.3,711.6 1209.0,712.0 1214.7,712.3 C1220.4,712.7 1227.6,715.5 1231.7,713.4 C1235.9,711.2 1237.1,704.5 1239.5,699.5 C1241.8,694.6 1242.0,686.6 1245.9,683.6 C1249.8,680.7 1257.1,682.4 1262.7,681.8 C1268.3,681.3 1274.0,680.8 1279.7,680.3 C1285.4,679.8 1291.1,679.4 1296.8,678.9 C1302.5,678.4 1308.4,678.6 1313.9,677.5 C1319.4,676.4 1324.6,674.7 1329.7,672.2 C1334.7,669.8 1339.2,665.9 1344.0,662.8 C1348.8,659.7 1353.6,656.6 1358.4,653.5 C1363.3,650.4 1368.1,647.4 1373.0,644.4 C1377.8,641.3 1382.7,638.3 1387.5,635.3 C1392.4,632.2 1397.2,629.2 1402.1,626.2 C1406.9,623.1 1412.0,620.5 1416.6,617.1 C1421.2,613.7 1425.2,609.6 1429.5,605.8 C1433.8,602.1 1438.0,598.3 1442.3,594.5 C1446.6,590.7 1450.8,586.9 1455.1,583.1 C1459.4,579.3 1463.9,575.8 1467.9,571.7 C1471.8,567.7 1475.2,563.1 1478.8,558.6 C1482.3,554.2 1485.7,549.6 1489.2,545.1 C1492.6,540.6 1496.1,536.1 1499.5,531.6 C1503.0,527.1 1506.5,522.6 1509.9,518.1 C1513.4,513.7 1516.9,509.2 1520.3,504.7 C1523.7,500.2 1527.4,495.9 1530.3,491.2 C1533.3,486.4 1535.5,481.2 1538.1,476.2 C1540.6,471.2 1543.2,466.2 1545.8,461.3 C1548.4,456.3 1550.9,451.4 1553.4,446.5 C1555.9,441.5 1559.3,436.8 1561.0,431.7 C1562.6,426.5 1562.7,420.9 1563.4,415.4 C1564.1,410.0 1564.7,401.7 1565.0,399.0" fill="none" stroke="#f4f400" stroke-width="1.1"/>
<path d="M1064.6,454.8 C1067.3,465.0 1071.4,492.1 1081.0,516.0 C1090.6,540.0 1106.2,571.1 1122.0,598.5 C1137.8,625.9 1161.8,661.0 1175.5,680.6 C1189.2,700.2 1199.2,710.1 1204.0,716.0" fill="none" stroke="#f4f400" stroke-width="1.1"/>
<path d="M1122.0,426.0 C1127.5,434.2 1142.7,453.1 1155.0,475.0 C1167.3,496.9 1183.7,530.0 1196.0,557.4 C1208.3,584.8 1221.5,616.9 1229.0,639.5 C1236.5,662.1 1239.0,684.1 1241.0,693.0" fill="none" stroke="#f4f400" stroke-width="1.1"/>
<path d="M1196.0,376.8 C1204.2,386.4 1230.2,414.4 1245.3,434.2 C1260.4,454.0 1272.7,469.8 1286.4,495.8 C1300.1,521.8 1317.8,562.3 1327.4,590.3 C1337.0,618.3 1341.1,651.7 1343.8,664.0" fill="none" stroke="#f4f400" stroke-width="1.1"/>
<path d="M1261.7,334.0 C1267.2,340.4 1283.6,354.6 1294.6,372.7 C1305.5,390.8 1315.8,420.6 1327.4,442.5 C1339.0,464.4 1352.1,479.4 1364.4,504.0 C1376.7,528.6 1391.7,572.3 1401.3,590.3 C1410.9,608.3 1418.5,608.4 1421.9,612.0" fill="none" stroke="#f4f400" stroke-width="1.1"/>
<path d="M1409.5,295.5 C1416.3,304.9 1436.9,334.4 1450.6,352.0 C1464.3,369.6 1481.4,384.3 1491.7,401.4 C1502.0,418.5 1505.4,438.4 1512.2,454.8 C1519.0,471.2 1529.3,492.5 1532.7,500.0" fill="none" stroke="#f4f400" stroke-width="1.1"/>
<path d="M1055.0,519.4 C1055.0,512.0 1057.2,492.7 1058.3,486.2 C1059.3,479.7 1062.3,467.8 1064.0,464.0 C1065.7,460.2 1070.7,455.3 1073.0,454.0 C1075.3,452.7 1080.1,452.3 1084.0,453.0 C1087.9,453.7 1101.9,463.5 1106.4,459.6 C1111.0,455.7 1118.4,427.9 1123.0,419.8 C1127.6,411.7 1141.0,395.0 1146.0,390.0 C1151.0,385.0 1160.9,378.5 1166.0,377.0 C1171.1,375.5 1183.4,379.5 1189.5,377.5 C1195.6,375.5 1211.3,364.4 1218.0,359.6 C1224.7,354.8 1240.3,340.8 1246.8,336.4 C1253.3,332.0 1267.3,324.3 1273.6,322.0 C1279.9,319.7 1292.4,318.4 1300.5,316.7 C1308.6,315.0 1330.9,310.1 1343.4,307.7 C1355.9,305.3 1396.7,297.7 1408.0,296.0 C1419.3,294.3 1431.7,293.3 1440.0,293.4 C1448.3,293.5 1470.8,295.1 1479.5,297.0 C1488.2,298.9 1507.9,305.8 1515.0,309.5 C1522.1,313.2 1535.6,324.4 1540.0,329.0 C1544.4,333.6 1550.4,343.8 1553.0,349.0 C1555.6,354.2 1560.6,368.2 1562.0,374.0 C1563.4,379.8 1565.4,392.4 1565.4,399.0 C1565.4,405.6 1564.1,423.1 1562.0,431.0 C1559.9,438.9 1551.3,459.5 1547.5,467.0 C1543.7,474.5 1535.0,487.8 1529.6,495.7 C1524.2,503.6 1507.7,525.8 1501.0,535.0 C1494.3,544.2 1478.7,566.9 1472.0,574.4 C1465.3,581.9 1449.8,593.9 1443.7,599.5 C1437.6,605.1 1427.3,617.5 1419.4,622.4 C1411.5,627.3 1383.6,636.9 1376.0,641.6 C1368.4,646.3 1357.9,659.3 1354.5,663.0 C1351.1,666.7 1350.4,670.8 1347.0,673.0 C1343.6,675.2 1332.3,680.2 1325.5,682.0 C1318.7,683.8 1298.0,688.0 1289.0,688.7 C1280.0,689.4 1253.6,686.2 1248.0,688.0 C1242.4,689.8 1242.4,700.4 1241.0,704.0 C1239.6,707.6 1240.9,716.7 1236.0,718.6 C1231.1,720.5 1206.8,720.8 1199.4,720.2 C1192.0,719.6 1178.6,716.5 1172.8,713.6 C1167.0,710.7 1155.0,699.4 1149.6,695.3 C1144.2,691.2 1131.3,682.6 1126.3,678.7 C1121.3,674.8 1110.7,666.3 1106.4,662.0 C1102.1,657.7 1094.1,648.4 1089.8,642.2 C1085.5,636.0 1073.0,615.6 1069.9,609.0 C1066.8,602.4 1064.6,592.8 1063.2,585.8 C1061.8,578.8 1059.3,556.9 1058.3,549.2 C1057.3,541.5 1055.0,526.8 1055.0,519.4Z" fill="none" stroke="#f4f400" stroke-width="1.8"/>
<line x1="385" y1="1072" x2="373" y2="1048" stroke="#4aa040" stroke-width="1.5"/><path d="M371 1044 L369 1052 L376 1050Z" fill="#4aa040"/>
<line x1="385" y1="1072" x2="408" y2="1056" stroke="#3a7ac8" stroke-width="1.5"/><path d="M412 1053 L404 1054 L408 1060Z" fill="#3a7ac8"/>
<circle cx="385" cy="1072" r="3" fill="#d02060"/>
<text x="366" y="1040" font-family="Liberation Sans" font-size="12" text-anchor="middle">y</text><text x="418" y="1054" font-family="Liberation Sans" font-size="12" text-anchor="middle">z</text><text x="385" y="1079" font-family="Liberation Sans" font-size="8" text-anchor="middle">x</text>
</g></svg>
<svg style="left:0;top:0" width="1732" height="240">
<circle cx="356.5" cy="216.5" r="5" fill="none" stroke="#2a86c8" stroke-width="1.6"/><line x1="360" y1="220" x2="364" y2="224" stroke="#2a86c8" stroke-width="2.4" stroke-linecap="round"/><line x1="354" y1="216.5" x2="359" y2="216.5" stroke="#2a86c8" stroke-width="1.4"/><line x1="356.5" y1="214" x2="356.5" y2="219" stroke="#2a86c8" stroke-width="1.4"/>
<circle cx="380.5" cy="216.5" r="5" fill="none" stroke="#2a86c8" stroke-width="1.6"/><line x1="384" y1="220" x2="388" y2="224" stroke="#2a86c8" stroke-width="2.4" stroke-linecap="round"/><line x1="378" y1="216.5" x2="383" y2="216.5" stroke="#2a86c8" stroke-width="1.4"/>
<circle cx="405.5" cy="216.5" r="5" fill="none" stroke="#2a86c8" stroke-width="1.6"/><line x1="409" y1="220" x2="413" y2="224" stroke="#2a86c8" stroke-width="2.4" stroke-linecap="round"/><line x1="403" y1="216.5" x2="408" y2="216.5" stroke="#2a86c8" stroke-width="1.4"/><line x1="405.5" y1="214" x2="405.5" y2="219" stroke="#2a86c8" stroke-width="1.4"/>
<rect x="398.5" y="216.5" width="8" height="7" fill="none" stroke="#2a86c8" stroke-width="1.2" stroke-dasharray="2 1.5"/>
<path d="M420 216 L427 216 L423.5 220.5Z" fill="#606060"/>
<path d="M484 216 L491 216 L487.5 220.5Z" fill="#606060"/>
<path d="M620 216 L627 216 L623.5 220.5Z" fill="#606060"/>
<rect x="434.5" y="210.5" width="14" height="14" fill="none" stroke="#555" stroke-width="1.1"/><path d="M441.5 213 L439.5 215.5 L443.5 215.5Z M441.5 222.5 L439.5 220 L443.5 220Z M437 217.7 L439.5 215.7 L439.5 219.7Z" fill="#2a86c8"/><path d="M438.5 217.7 L445 217.7 M441.5 214.5 L441.5 221" stroke="#555" stroke-width="0.9"/>
<line x1="456.5" y1="208" x2="456.5" y2="228" stroke="#c8c8c8" stroke-width="1"/>
<line x1="592.5" y1="208" x2="592.5" y2="228" stroke="#c8c8c8" stroke-width="1"/>
<line x1="632.5" y1="208" x2="632.5" y2="228" stroke="#c8c8c8" stroke-width="1"/>
<line x1="756.5" y1="208" x2="756.5" y2="228" stroke="#c8c8c8" stroke-width="1"/>
<path d="M469.5 224 L469.5 211" stroke="#4aa040" stroke-width="1.3"/><path d="M469.5 224 L478 219.5" stroke="#d02060" stroke-width="1.3"/><path d="M469.5 224 L462 220" stroke="#3a7ac8" stroke-width="1.3"/>
<path d="M500.5 210 L500.5 224.5 L513 224.5" fill="none" stroke="#4aa040" stroke-width="1.1"/><path d="M507 224.5 L513 224.5" stroke="#d02060" stroke-width="1.1"/>
<text x="508" y="220" font-family="Liberation Sans" font-size="9.5" fill="#888" text-anchor="middle">xy</text>
<path d="M524.5 210 L524.5 224.5 L537 224.5" fill="none" stroke="#4aa040" stroke-width="1.1"/><path d="M531 224.5 L537 224.5" stroke="#4aa040" stroke-width="1.1"/>
<text x="532" y="220" font-family="Liberation Sans" font-size="9.5" fill="#888" text-anchor="middle">yz</text>
<path d="M548.5 210 L548.5 224.5 L561 224.5" fill="none" stroke="#d02060" stroke-width="1.1"/><path d="M555 224.5 L561 224.5" stroke="#d02060" stroke-width="1.1"/>
<text x="556" y="220" font-family="Liberation Sans" font-size="9.5" fill="#888" text-anchor="middle">xz</text>
<path d="M571 213 L576 213 L576 223 L571 223Z M577 215 L585 211 L585 225 L577 221Z" fill="#2a86c8"/>
<path d="M611 214 A6 6 0 1 1 605 212" fill="none" stroke="#2a86c8" stroke-width="1.5"/><path d="M604 208.5 L608.5 212 L604 215.5Z" fill="#2a86c8"/>
<rect x="634.5" y="207.5" width="23" height="21" rx="3" fill="#cfe6fb" stroke="#62b2f2" stroke-width="1"/>
<rect x="682.5" y="207.5" width="23" height="21" rx="3" fill="#cfe6fb" stroke="#62b2f2" stroke-width="1"/>
<rect x="706.5" y="207.5" width="23" height="21" rx="3" fill="#cfe6fb" stroke="#62b2f2" stroke-width="1"/>
<path d="M640 215 L645 215 L652 211 L652 225 L645 221 L640 221Z" fill="#2a86c8"/>
<path d="M663.5 214.5 L667 211.5 L677 211.5 L677 221 L673.5 224.5 L663.5 224.5Z M663.5 214.5 L673.5 214.5 L673.5 224.5 M673.5 214.5 L677 211.5" fill="#e6eef6" stroke="#6a8aa8" stroke-width="1"/>
<rect x="687.5" y="211.5" width="13" height="13" fill="none" stroke="#555" stroke-width="1"/><path d="M687.5 216 L700.5 216 M687.5 220 L700.5 220 M691.8 211.5 L691.8 224.5 M696.2 211.5 L696.2 224.5" stroke="#555" stroke-width="0.8"/>
<rect x="711.5" y="211.5" width="13" height="13" fill="none" stroke="#555" stroke-width="1"/><path d="M718 222 L718 214" stroke="#4aa040" stroke-width="1.2"/><path d="M718 222 L723 219" stroke="#d02060" stroke-width="1.2"/><path d="M718 222 L713.5 219.5" stroke="#3a7ac8" stroke-width="1.2"/>
<rect x="734.5" y="211.5" width="15" height="13" fill="none" stroke="#555" stroke-width="1"/><defs><linearGradient id="leg" x1="0" y1="0" x2="0" y2="1"><stop offset="0" stop-color="#c02020"/><stop offset="0.5" stop-color="#f0c020"/><stop offset="1" stop-color="#2060d0"/></linearGradient></defs><rect x="743" y="212.5" width="3.5" height="11" fill="url(#leg)"/>
<path d="M763 214 L767 214 L769 212 L773 212 L775 214 L778 214 L778 224 L763 224Z" fill="#2a86c8"/><circle cx="770.5" cy="219" r="3" fill="#fff"/><circle cx="770.5" cy="219" r="1.8" fill="#2a86c8"/>
</svg>
</body></html>
